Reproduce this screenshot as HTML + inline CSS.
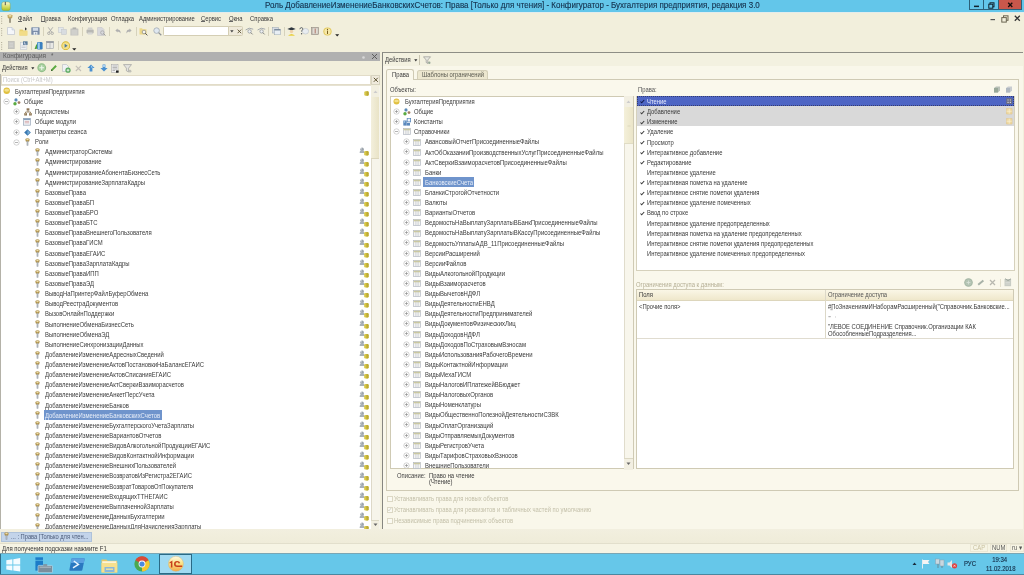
<!DOCTYPE html>
<html><head><meta charset="utf-8"><style>
html,body{margin:0;padding:0;}
body{width:1024px;height:575px;overflow:hidden;position:relative;background:#f2efdc;font-family:"Liberation Sans", sans-serif;}
body>div,body>svg{position:absolute;}
.t{white-space:nowrap;}
#w{position:absolute;left:0;top:0;width:1024px;height:575px;will-change:transform;}
#w>div,#w>svg{position:absolute;}
</style></head><body><div id="w">
<div style="left:0.00px;top:0.00px;width:1024.00px;height:11.50px;background:#63c6ea"></div>
<svg style="left:1.00px;top:1.00px;" width="10" height="10" viewBox="0 0 10 10"><defs><linearGradient id="gt" x1="0" y1="0" x2="0" y2="1"><stop offset="0" stop-color="#f6f8d8"/><stop offset="0.5" stop-color="#dce070"/><stop offset="1" stop-color="#a8c020"/></linearGradient></defs><rect x="0.8" y="1" width="8.4" height="8.6" rx="2" fill="url(#gt)" stroke="#90a030" stroke-width="0.4"/><path d="M4.3 0.9 V4.2" stroke="#333" stroke-width="0.8"/></svg>
<div class="t" style="left:264.50px;top:0.90px;font-size:8.25px;line-height:9.90px;color:#14304c;transform:scaleX(0.97);transform-origin:0 50%;-webkit-text-stroke:0.12px #14304c;">Роль ДобавлениеИзменениеБанковскихСчетов: Права [Только для чтения] - Конфигуратор - Бухгалтерия предприятия, редакция 3.0</div>
<div style="left:969.20px;top:0.00px;width:15.00px;height:10.30px;border:0.8px solid #2b5f78;border-top:none;box-sizing:border-box;background:#63c6ea"></div>
<div style="left:984.20px;top:0.00px;width:14.00px;height:10.30px;border-bottom:0.8px solid #2b5f78;box-sizing:border-box;background:#63c6ea"></div>
<div style="left:998.00px;top:0.00px;width:24.20px;height:10.30px;background:#c9574b;border:0.8px solid #2b5f78;border-top:none;box-sizing:border-box"></div>
<svg style="left:974.00px;top:4.50px;" width="6" height="3" viewBox="0 0 6 3"><rect x="0" y="0.6" width="5" height="1.5" fill="#10222e"/></svg>
<svg style="left:988.00px;top:1.50px;" width="7" height="7" viewBox="0 0 7 7"><rect x="2" y="0.8" width="4" height="4" fill="none" stroke="#10222e" stroke-width="1"/><rect x="0.8" y="2.2" width="4" height="4" fill="#63c6ea" stroke="#10222e" stroke-width="1"/></svg>
<svg style="left:1007.00px;top:1.50px;" width="7" height="6" viewBox="0 0 7 6"><path d="M1.2 0.8 L5.3 5 M5.3 0.8 L1.2 5" stroke="#1a0c0a" stroke-width="1.3"/></svg>
<div style="left:0.00px;top:11.50px;width:1024.00px;height:1.00px;background:#e4ecec"></div>
<svg style="left:1.20px;top:15.50px;" width="2" height="8" viewBox="0 0 2 8"><rect x="0" y="0.0" width="1.2" height="1" fill="#b8b4a0"/><rect x="0" y="2.3" width="1.2" height="1" fill="#b8b4a0"/><rect x="0" y="4.6" width="1.2" height="1" fill="#b8b4a0"/><rect x="0" y="6.8999999999999995" width="1.2" height="1" fill="#b8b4a0"/></svg>
<svg style="left:1.20px;top:28.00px;" width="2" height="8" viewBox="0 0 2 8"><rect x="0" y="0.0" width="1.2" height="1" fill="#b8b4a0"/><rect x="0" y="2.3" width="1.2" height="1" fill="#b8b4a0"/><rect x="0" y="4.6" width="1.2" height="1" fill="#b8b4a0"/><rect x="0" y="6.8999999999999995" width="1.2" height="1" fill="#b8b4a0"/></svg>
<svg style="left:1.20px;top:41.50px;" width="2" height="8" viewBox="0 0 2 8"><rect x="0" y="0.0" width="1.2" height="1" fill="#b8b4a0"/><rect x="0" y="2.3" width="1.2" height="1" fill="#b8b4a0"/><rect x="0" y="4.6" width="1.2" height="1" fill="#b8b4a0"/><rect x="0" y="6.8999999999999995" width="1.2" height="1" fill="#b8b4a0"/></svg>
<svg style="left:6.60px;top:14.00px;" width="6" height="9" viewBox="0 0 6 9"><path d="M0.4 1.3 Q3 -0.4 5.6 1.3 L5.1 4.1 Q3 5.1 0.9 4.1 Z" fill="#c0a460"/><ellipse cx="3" cy="1.8" rx="1.5" ry="0.9" fill="#f0e2a8"/><rect x="2.2" y="4.2" width="1.6" height="4.6" fill="#8a8470"/></svg>
<div class="t" style="left:18.00px;top:14.55px;font-size:6.50px;line-height:7.80px;color:#3a3a3a;transform:scaleX(0.9);transform-origin:0 50%;">Файл</div>
<div style="left:18.00px;top:21.20px;width:4.20px;height:0.55px;background:#666"></div>
<div class="t" style="left:41.00px;top:14.55px;font-size:6.50px;line-height:7.80px;color:#3a3a3a;transform:scaleX(0.9);transform-origin:0 50%;">Правка</div>
<div style="left:41.00px;top:21.20px;width:4.20px;height:0.55px;background:#666"></div>
<div class="t" style="left:67.70px;top:14.55px;font-size:6.50px;line-height:7.80px;color:#3a3a3a;transform:scaleX(0.9);transform-origin:0 50%;">Конфигурация</div>
<div class="t" style="left:111.00px;top:14.55px;font-size:6.50px;line-height:7.80px;color:#3a3a3a;transform:scaleX(0.9);transform-origin:0 50%;">Отладка</div>
<div class="t" style="left:139.00px;top:14.55px;font-size:6.50px;line-height:7.80px;color:#3a3a3a;transform:scaleX(0.9);transform-origin:0 50%;">Администрирование</div>
<div class="t" style="left:201.00px;top:14.55px;font-size:6.50px;line-height:7.80px;color:#3a3a3a;transform:scaleX(0.9);transform-origin:0 50%;">Сервис</div>
<div style="left:201.00px;top:21.20px;width:4.20px;height:0.55px;background:#666"></div>
<div class="t" style="left:228.90px;top:14.55px;font-size:6.50px;line-height:7.80px;color:#3a3a3a;transform:scaleX(0.9);transform-origin:0 50%;">Окна</div>
<div style="left:228.90px;top:21.20px;width:4.20px;height:0.55px;background:#666"></div>
<div class="t" style="left:250.40px;top:14.55px;font-size:6.50px;line-height:7.80px;color:#3a3a3a;transform:scaleX(0.9);transform-origin:0 50%;">Справка</div>
<svg style="left:990.00px;top:17.00px;" width="7" height="4" viewBox="0 0 7 4"><rect x="0.5" y="2" width="4.5" height="1.2" fill="#555"/></svg>
<svg style="left:1001.00px;top:14.50px;" width="8" height="8" viewBox="0 0 8 8"><rect x="2.5" y="0.8" width="4.5" height="4.5" fill="none" stroke="#6a6450" stroke-width="1"/><rect x="0.8" y="2.6" width="4.5" height="4.5" fill="#f2efdc" stroke="#6a6450" stroke-width="1"/></svg>
<svg style="left:1013.50px;top:14.80px;" width="7" height="7" viewBox="0 0 7 7"><path d="M0.8 0.8 L5.8 5.8 M5.8 0.8 L0.8 5.8" stroke="#333" stroke-width="1.25"/></svg>
<svg style="left:7.00px;top:27.00px;" width="8" height="8" viewBox="0 0 8 8"><path d="M0.5 0.5 H5 L7.5 3 V7.5 H0.5 Z" fill="#f4f6fa" stroke="#b8c0cc" stroke-width="0.6"/><path d="M5 0.5 V3 H7.5" fill="#dde2ea" stroke="#b8c0cc" stroke-width="0.5"/></svg>
<svg style="left:19.00px;top:26.50px;" width="9" height="9" viewBox="0 0 9 9"><path d="M0.5 2.5 H3.5 L4.3 3.5 H8.3 V8.5 H0.5 Z" fill="#e8cf70"/><rect x="0.5" y="4.2" width="7.8" height="4.3" fill="#f2dc88"/><path d="M6 0.3 L8 2 L6 3.6" fill="#333"/></svg>
<svg style="left:30.50px;top:27.00px;" width="9" height="8" viewBox="0 0 9 8"><rect x="0.3" y="0.3" width="8.3" height="7.5" rx="0.6" fill="#7a8ca8"/><rect x="1.8" y="0.8" width="5.3" height="3" fill="#d0dae8"/><rect x="2.6" y="5" width="3.8" height="2.8" fill="#e8eef4"/><rect x="4.2" y="5.6" width="1" height="1.8" fill="#7a8ca8"/></svg>
<div style="left:42.50px;top:26.50px;width:0.70px;height:9.00px;background:#d6d2bc"></div>
<svg style="left:47.00px;top:27.00px;" width="7" height="8" viewBox="0 0 7 8"><path d="M1.2 0.3 L4.8 5.2 M5.8 0.3 L2.2 5.2" stroke="#a8a8a8" stroke-width="0.9"/><circle cx="1.8" cy="6.3" r="1.2" fill="none" stroke="#a0a0a0" stroke-width="0.8"/><circle cx="5.2" cy="6.3" r="1.2" fill="none" stroke="#a0a0a0" stroke-width="0.8"/></svg>
<svg style="left:58.00px;top:27.00px;" width="9" height="8" viewBox="0 0 9 8"><rect x="0.4" y="0.4" width="4.8" height="5.2" fill="#e4e8ec" stroke="#c0c4c8" stroke-width="0.5"/><rect x="3.6" y="2.4" width="4.8" height="5.2" fill="#d8dce0" stroke="#c0c4c8" stroke-width="0.5"/></svg>
<svg style="left:70.00px;top:26.50px;" width="9" height="9" viewBox="0 0 9 9"><rect x="0.4" y="1.4" width="8" height="7.2" rx="0.5" fill="#c4c4c0"/><rect x="2.6" y="0.4" width="3.6" height="1.6" fill="#b0b0ac"/><rect x="1.5" y="3" width="5.8" height="4.8" fill="#d0d0cc"/></svg>
<div style="left:81.70px;top:26.50px;width:0.70px;height:9.00px;background:#d6d2bc"></div>
<svg style="left:86.00px;top:27.00px;" width="8" height="8" viewBox="0 0 8 8"><rect x="0.5" y="2.6" width="7.2" height="3.8" rx="0.8" fill="#b8b8b4"/><rect x="1.8" y="0.5" width="4.6" height="2.4" fill="#d0d0cc"/><rect x="1.8" y="5.4" width="4.6" height="2.2" fill="#d8d8d4"/></svg>
<svg style="left:97.00px;top:26.50px;" width="9" height="9" viewBox="0 0 9 9"><path d="M0.5 0.5 H5 L7 2.5 V8.5 H0.5 Z" fill="#d8d8dc" stroke="#c0c0c4" stroke-width="0.5"/><circle cx="5.4" cy="5.6" r="1.8" fill="none" stroke="#a8a8a8" stroke-width="0.8"/><path d="M6.6 6.8 L8.5 8.6" stroke="#909090" stroke-width="1"/></svg>
<div style="left:109.00px;top:26.50px;width:0.70px;height:9.00px;background:#d6d2bc"></div>
<svg style="left:114.50px;top:28.00px;" width="6" height="6" viewBox="0 0 6 6"><path d="M0.4 2.4 L2.6 0.4 V1.6 Q5.8 1.6 5.6 5.6 Q4.6 3.4 2.6 3.4 V4.5 Z" fill="#b0b0b0"/></svg>
<svg style="left:125.60px;top:28.00px;" width="6" height="6" viewBox="0 0 6 6"><path d="M5.6 2.4 L3.4 0.4 V1.6 Q0.2 1.6 0.4 5.6 Q1.4 3.4 3.4 3.4 V4.5 Z" fill="#b0b0b0"/></svg>
<div style="left:136.20px;top:26.50px;width:0.70px;height:9.00px;background:#d6d2bc"></div>
<svg style="left:139.30px;top:26.50px;" width="9" height="9" viewBox="0 0 9 9"><path d="M0.5 1.2 H3 L3.8 2.2 H7.5 V7.5 H0.5 Z" fill="#ecd888"/><circle cx="5" cy="5" r="1.8" fill="#f4f4f0" stroke="#888" stroke-width="0.7"/><path d="M6.2 6.2 L8.4 8.4" stroke="#555" stroke-width="1"/></svg>
<svg style="left:152.80px;top:26.50px;" width="9" height="9" viewBox="0 0 9 9"><circle cx="3.6" cy="3.6" r="2.8" fill="#e0e8f0" stroke="#a8b0b8" stroke-width="0.9"/><path d="M5.6 5.6 L8.3 8.3" stroke="#909498" stroke-width="1.3"/></svg>
<div style="left:163.00px;top:26.30px;width:73.00px;height:9.70px;background:#fff;border:0.6px solid #d4ceb4;border-radius:1.5px 0 0 1.5px;box-sizing:border-box"></div>
<div style="left:227.60px;top:26.30px;width:15.00px;height:9.70px;background:#efeadb;border:0.6px solid #d4ceb4;border-radius:0 1.5px 1.5px 0;box-sizing:border-box"></div>
<svg style="left:229.50px;top:30.00px;" width="4" height="3" viewBox="0 0 4 3"><path d="M0.2 0.3 H3.6 L1.9 2.5 Z" fill="#444"/></svg>
<svg style="left:236.80px;top:28.60px;" width="5" height="5" viewBox="0 0 5 5"><path d="M0.6 0.6 L4.2 4.2 M4.2 0.6 L0.6 4.2" stroke="#5a5030" stroke-width="0.9"/></svg>
<svg style="left:244.50px;top:27.00px;" width="9" height="8" viewBox="0 0 9 8"><path d="M0.6 3 Q4 -0.2 8.2 2.2" fill="none" stroke="#9aa0a8" stroke-width="0.9"/><circle cx="4.6" cy="4.4" r="1.7" fill="#eef0f2" stroke="#8a9098" stroke-width="0.7"/><path d="M5.8 5.6 L7.6 7.4" stroke="#777" stroke-width="0.9"/></svg>
<svg style="left:257.20px;top:27.00px;" width="9" height="8" viewBox="0 0 9 8"><path d="M0.6 3 Q4 -0.2 8.2 2.2" fill="none" stroke="#9aa0a8" stroke-width="0.9"/><circle cx="4.6" cy="4.4" r="1.7" fill="#eef0f2" stroke="#8a9098" stroke-width="0.7"/><path d="M5.8 5.6 L7.6 7.4" stroke="#777" stroke-width="0.9"/></svg>
<div style="left:268.40px;top:26.50px;width:0.70px;height:9.00px;background:#d6d2bc"></div>
<svg style="left:272.00px;top:27.00px;" width="9" height="8" viewBox="0 0 9 8"><rect x="0.4" y="0.4" width="6" height="5.6" fill="#d8dee6" stroke="#98a4b0" stroke-width="0.5"/><rect x="2.4" y="2.2" width="6" height="5.6" fill="#e8eef4" stroke="#98a4b0" stroke-width="0.5"/><rect x="2.4" y="2.2" width="6" height="1.2" fill="#6a7c90"/></svg>
<div style="left:283.60px;top:26.50px;width:0.70px;height:9.00px;background:#d6d2bc"></div>
<svg style="left:287.00px;top:26.50px;" width="9" height="9" viewBox="0 0 9 9"><path d="M0.3 2 L4.5 0.3 L8.7 2 L4.5 3.6 Z" fill="#303840"/><circle cx="4.5" cy="4.6" r="1.7" fill="#f0d0a8"/><path d="M1 8.8 Q4.5 5.2 8 8.8 Z" fill="#e8d040"/></svg>
<svg style="left:299.00px;top:26.50px;" width="10" height="9" viewBox="0 0 10 9"><ellipse cx="6.5" cy="4.2" rx="3.2" ry="2.8" fill="#e8ecf0" stroke="#b0b8c0" stroke-width="0.5"/><path d="M0.8 2.2 Q1.2 0.4 2.8 0.6 Q4.2 0.9 3.6 2.6 Q2.6 3.4 2.6 4.6" fill="none" stroke="#505860" stroke-width="0.9"/><circle cx="2.6" cy="6.8" r="0.7" fill="#505860"/></svg>
<svg style="left:311.00px;top:27.00px;" width="8" height="8" viewBox="0 0 8 8"><rect x="0.5" y="0.5" width="7" height="7" fill="#b8b0a8" stroke="#8a8278" stroke-width="0.5"/><rect x="1.6" y="1.2" width="5.2" height="5.6" fill="#e0dcd4"/><path d="M4.2 1.6 V6.4" stroke="#9a4a3a" stroke-width="0.7"/></svg>
<svg style="left:323.30px;top:26.50px;" width="9" height="9" viewBox="0 0 9 9"><circle cx="4.5" cy="4.5" r="4.1" fill="#e0c450"/><circle cx="4.5" cy="4.5" r="3.2" fill="#f6e8a8"/><rect x="4" y="3.6" width="1" height="3.4" fill="#7a6020"/><circle cx="4.5" cy="2.4" r="0.6" fill="#7a6020"/></svg>
<svg style="left:335.00px;top:33.50px;" width="5" height="3" viewBox="0 0 5 3"><path d="M0.2 0.3 H4.2 L2.2 2.6 Z" fill="#222"/></svg>
<svg style="left:7.50px;top:41.20px;" width="7" height="8" viewBox="0 0 7 8"><rect x="0.4" y="0.4" width="5.8" height="7.4" fill="#c8c8c4" stroke="#b0b0ac" stroke-width="0.5"/><path d="M1.5 2.4 H5 M1.5 4 H5 M1.5 5.6 H5" stroke="#dcdcd8" stroke-width="0.5"/></svg>
<svg style="left:19.50px;top:40.70px;" width="8" height="9" viewBox="0 0 8 9"><rect x="0.4" y="1.2" width="6.5" height="7.4" fill="#eef0f2" stroke="#b8c0c8" stroke-width="0.5"/><rect x="3" y="0.3" width="4.6" height="3.6" fill="#5a7c9c"/><path d="M4.4 1 V3 H6.2" fill="none" stroke="#eef" stroke-width="0.6"/><path d="M1.4 5 H5.6 M1.4 6.5 H5.6" stroke="#a8b0b8" stroke-width="0.5"/></svg>
<div style="left:30.50px;top:40.70px;width:0.70px;height:9.00px;background:#d6d2bc"></div>
<svg style="left:33.60px;top:40.70px;" width="9" height="9" viewBox="0 0 9 9"><path d="M0.6 8 L2.4 3 L3.6 5 L2.6 8 Z" fill="#4aa040"/><rect x="3" y="1" width="5.6" height="7.6" rx="1.3" fill="#3a80c0"/><rect x="3.8" y="1.6" width="2" height="6.4" fill="#a0d0f0"/></svg>
<svg style="left:46.00px;top:41.20px;" width="8" height="8" viewBox="0 0 8 8"><rect x="0.4" y="0.4" width="7.2" height="7.2" fill="#e8e8e6" stroke="#a0a4a8" stroke-width="0.6"/><rect x="0.4" y="0.4" width="7.2" height="1.4" fill="#8a9098"/><path d="M4 1.8 V7.6" stroke="#a0a4a8" stroke-width="0.6"/></svg>
<div style="left:58.00px;top:40.70px;width:0.70px;height:9.00px;background:#d6d2bc"></div>
<svg style="left:60.50px;top:40.60px;" width="9.5" height="9.5" viewBox="0 0 9.5 9.5"><circle cx="4.75" cy="4.75" r="4.4" fill="#d8b830"/><circle cx="4.75" cy="4.75" r="3.5" fill="#f4e08a"/><path d="M3.6 2.8 L6.6 4.75 L3.6 6.7 Z" fill="#4a7a9a"/></svg>
<svg style="left:72.30px;top:48.00px;" width="5" height="3" viewBox="0 0 5 3"><path d="M0.2 0.3 H4.4 L2.3 2.6 Z" fill="#222"/></svg>
<div style="left:0.00px;top:51.80px;width:380.00px;height:9.50px;background:#b0b0b0"></div>
<div class="t" style="left:2.50px;top:52.38px;font-size:7.11px;line-height:8.53px;color:#5a5a5a;transform:scaleX(0.9);transform-origin:0 50%;">Конфигурация</div>
<div class="t" style="left:50.50px;top:52.05px;font-size:6.67px;line-height:8.00px;color:#5a5a5a;transform:scaleX(0.9);transform-origin:0 50%;">*</div>
<svg style="left:361.00px;top:54.50px;" width="5" height="5" viewBox="0 0 5 5"><circle cx="2.5" cy="2.5" r="1.3" fill="#d8d8d8"/></svg>
<svg style="left:371.00px;top:53.00px;" width="7" height="7" viewBox="0 0 7 7"><path d="M1 1 L6 6 M6 1 L1 6" stroke="#555" stroke-width="0.9"/></svg>
<div class="t" style="left:2.00px;top:63.75px;font-size:6.50px;line-height:7.80px;color:#3a3a3a;transform:scaleX(0.9);transform-origin:0 50%;">Действия</div>
<svg style="left:30.50px;top:67.00px;" width="4" height="3" viewBox="0 0 4 3"><path d="M0.2 0.3 H3.4 L1.8 2.4 Z" fill="#333"/></svg>
<svg style="left:37.00px;top:63.40px;" width="9.5" height="9.5" viewBox="0 0 9.5 9.5"><circle cx="4.75" cy="4.75" r="4.4" fill="#8cbc84"/><circle cx="4.75" cy="4.75" r="3.4" fill="#a8d0a0"/><path d="M4.75 2.4 V7.1 M2.4 4.75 H7.1" stroke="#f0f8f0" stroke-width="1"/></svg>
<svg style="left:50.30px;top:64.00px;" width="7.5" height="8" viewBox="0 0 7.5 8"><path d="M1 7 L1.4 5.2 L5.4 1 L6.8 2.4 L2.8 6.6 Z" fill="#5aaa40"/><path d="M1 7 L1.4 5.2 L2.8 6.6 Z" fill="#2a4a20"/></svg>
<svg style="left:62.00px;top:63.50px;" width="9" height="9" viewBox="0 0 9 9"><path d="M0.5 0.5 H4.5 L6.5 2.5 V7.5 H0.5 Z" fill="#f0f2f4" stroke="#a8b0b8" stroke-width="0.5"/><circle cx="6" cy="6.2" r="2.6" fill="#5aaa60"/><path d="M6 4.8 V7.6 M4.6 6.2 H7.4" stroke="#fff" stroke-width="0.8"/></svg>
<svg style="left:75.00px;top:64.50px;" width="7" height="7" viewBox="0 0 7 7"><path d="M0.8 0.8 L6 6 M6 0.8 L0.8 6" stroke="#c4c0b8" stroke-width="1.1"/></svg>
<svg style="left:87.00px;top:64.00px;" width="8" height="8" viewBox="0 0 8 8"><path d="M4 0.4 L7.6 4 H5.4 V7.4 H2.6 V4 H0.4 Z" fill="#4a90d0"/><path d="M4 1.4 L6 3.4 H4 Z" fill="#a8d0f0"/></svg>
<svg style="left:100.00px;top:64.00px;" width="8" height="8" viewBox="0 0 8 8"><path d="M4 7.6 L7.6 4 H5.4 V0.6 H2.6 V4 H0.4 Z" fill="#4a90d0"/><path d="M2.6 1 H5.4 V3 H2.6 Z" fill="#a8d0f0"/></svg>
<svg style="left:111.00px;top:63.50px;" width="8" height="9" viewBox="0 0 8 9"><rect x="0.5" y="0.5" width="6.5" height="8" fill="#f0f0f0" stroke="#a0a0a0" stroke-width="0.5"/><path d="M1.5 2 H6 M1.5 3.5 H6 M1.5 5 H6 M1.5 6.5 H4" stroke="#909090" stroke-width="0.6"/><rect x="5" y="6.5" width="2.6" height="2.2" fill="#222"/></svg>
<svg style="left:123.00px;top:63.50px;" width="9" height="9" viewBox="0 0 9 9"><path d="M0.5 0.6 H8.5 L5.6 4.2 V8 L3.4 6.8 V4.2 Z" fill="#e4e4e0" stroke="#909090" stroke-width="0.6"/><circle cx="7" cy="7.2" r="1.4" fill="#c0c0b8"/></svg>
<div style="left:1.00px;top:74.50px;width:369.50px;height:10.00px;background:#fff;border:0.6px solid #e2dcc8;box-sizing:border-box"></div>
<div class="t" style="left:2.50px;top:75.51px;font-size:6.56px;line-height:7.87px;color:#c8c8c8;transform:scaleX(0.9);transform-origin:0 50%;">Поиск (Ctrl+Alt+M)</div>
<div style="left:370.50px;top:74.50px;width:9.00px;height:10.00px;background:#efeadc;border:0.6px solid #d8d4c0;box-sizing:border-box"></div>
<svg style="left:372.50px;top:76.50px;" width="6" height="6" viewBox="0 0 6 6"><path d="M0.8 0.8 L4.8 4.8 M4.8 0.8 L0.8 4.8" stroke="#5a5030" stroke-width="1"/></svg>
<div style="left:0.00px;top:84.50px;width:371.00px;height:1.50px;background:#e6e2d2"></div>
<div style="left:1.00px;top:86.00px;width:369.50px;height:444.00px;background:#fff"></div>
<div style="left:0.00px;top:73.50px;width:0.90px;height:456.50px;background:#b4b2a8"></div>
<div style="left:370.50px;top:86.00px;width:9.00px;height:444.00px;background:#f6f4ea;border-left:0.5px solid #ddd8c8;box-sizing:border-box"></div>
<div style="left:370.80px;top:86.00px;width:8.60px;height:11.50px;background:#f2efe0;border-bottom:0.5px solid #dcd8c4"></div>
<div style="left:370.80px;top:97.30px;width:8.60px;height:61.00px;background:linear-gradient(90deg,#f3efdc,#e9e3c6);border-bottom:0.5px solid #dcd6bc"></div>
<div style="left:370.80px;top:519.50px;width:8.60px;height:10.50px;background:#f2efe0;border-top:0.5px solid #dcd8c4"></div>
<svg style="left:372.50px;top:523.00px;" width="5" height="4" viewBox="0 0 5 4"><path d="M0.5 0.5 H4.5 L2.5 3 Z" fill="#666"/></svg>
<svg style="left:372.50px;top:89.50px;" width="5" height="4" viewBox="0 0 5 4"><path d="M0.5 3 H4.5 L2.5 0.5 Z" fill="#ccc"/></svg>
<svg style="left:3.20px;top:87.30px;" width="7.4" height="7.4" viewBox="0 0 7.4 7.4"><circle cx="3.7" cy="3.7" r="3.2" fill="#e0c040"/><ellipse cx="3.7" cy="3.2" rx="2.4000000000000004" ry="1.4400000000000002" fill="#f4e08a"/></svg>
<svg style="left:363.60px;top:90.60px;" width="5" height="5" viewBox="0 0 5 5"><rect x="0.3" y="0.3" width="4.4" height="4.4" rx="1.3" fill="#d6c648"/><path d="M2.5 0.3 H3.4 Q4.7 0.3 4.7 1.6 V3.4 Q4.7 4.7 3.4 4.7 H2.5 Z" fill="#bcaa36"/></svg>
<div class="t" style="left:14.80px;top:87.55px;font-size:6.50px;line-height:7.80px;color:#3a3a3a;transform:scaleX(0.9);transform-origin:0 50%;">БухгалтерияПредприятия</div>
<svg style="left:3.00px;top:98.00px;" width="7" height="7" viewBox="0 0 7 7"><circle cx="3.5" cy="3.5" r="2.7" fill="#fff" stroke="#c0c0c0" stroke-width="0.7"/><path d="M2 3.5 H5" stroke="#8a8a8a" stroke-width="0.65"/></svg>
<svg style="left:12.50px;top:97.73px;" width="8" height="8" viewBox="0 0 8 8"><circle cx="3" cy="1.9" r="1.6" fill="#5a8ab8"/><circle cx="2" cy="5.8" r="1.7" fill="#5aaa40"/><circle cx="6" cy="4.6" r="1.4" fill="#a07a60"/></svg>
<div class="t" style="left:24.00px;top:97.68px;font-size:6.50px;line-height:7.80px;color:#3a3a3a;transform:scaleX(0.9);transform-origin:0 50%;">Общие</div>
<svg style="left:13.00px;top:108.00px;" width="7" height="7" viewBox="0 0 7 7"><circle cx="3.5" cy="3.5" r="2.7" fill="#fff" stroke="#c0c0c0" stroke-width="0.7"/><path d="M2 3.5 H5" stroke="#8a8a8a" stroke-width="0.65"/><path d="M3.5 2 V5" stroke="#8a8a8a" stroke-width="0.65"/></svg>
<div class="t" style="left:34.80px;top:107.81px;font-size:6.50px;line-height:7.80px;color:#3a3a3a;transform:scaleX(0.9);transform-origin:0 50%;">Подсистемы</div>
<svg style="left:23.50px;top:107.86px;" width="8" height="8" viewBox="0 0 8 8"><rect x="2.6" y="0.3" width="2.8" height="2.2" fill="#8c7454"/><path d="M4 2.3 V4 M1.5 4 H6.5 M1.5 4 V5.5 M6.5 4 V5.5" stroke="#8c7454" stroke-width="0.8"/><rect x="0.2" y="5.1" width="2.8" height="2.4" fill="#8c7454"/><rect x="5" y="5.1" width="2.8" height="2.4" fill="#8c7454"/><rect x="0.6" y="5.5" width="1.6" height="0.8" fill="#d8c8a8"/><rect x="5.4" y="5.5" width="1.6" height="0.8" fill="#d8c8a8"/></svg>
<svg style="left:13.00px;top:118.00px;" width="7" height="7" viewBox="0 0 7 7"><circle cx="3.5" cy="3.5" r="2.7" fill="#fff" stroke="#c0c0c0" stroke-width="0.7"/><path d="M2 3.5 H5" stroke="#8a8a8a" stroke-width="0.65"/><path d="M3.5 2 V5" stroke="#8a8a8a" stroke-width="0.65"/></svg>
<div class="t" style="left:34.80px;top:117.94px;font-size:6.50px;line-height:7.80px;color:#3a3a3a;transform:scaleX(0.9);transform-origin:0 50%;">Общие модули</div>
<svg style="left:23.40px;top:118.19px;" width="8" height="8" viewBox="0 0 8 8"><rect x="0.4" y="0.4" width="7" height="6.8" fill="#eef0f4" stroke="#9aa8b8" stroke-width="0.7"/><rect x="0.6" y="0.6" width="6.6" height="1.2" fill="#6c8cb0"/><path d="M1.8 3.4 H6 M1.8 4.8 H6" stroke="#d09090" stroke-width="0.6"/></svg>
<svg style="left:13.00px;top:129.00px;" width="7" height="7" viewBox="0 0 7 7"><circle cx="3.5" cy="3.5" r="2.7" fill="#fff" stroke="#c0c0c0" stroke-width="0.7"/><path d="M2 3.5 H5" stroke="#8a8a8a" stroke-width="0.65"/><path d="M3.5 2 V5" stroke="#8a8a8a" stroke-width="0.65"/></svg>
<div class="t" style="left:34.80px;top:128.07px;font-size:6.50px;line-height:7.80px;color:#3a3a3a;transform:scaleX(0.9);transform-origin:0 50%;">Параметры сеанса</div>
<svg style="left:23.80px;top:128.62px;" width="7" height="7" viewBox="0 0 7 7"><path d="M3.5 0.2 L6.8 3.5 L3.5 6.8 L0.2 3.5 Z" fill="#3a78b0"/><path d="M3.5 1.2 L5.8 3.5 L3.5 5.8 Z" fill="#7ab0d8"/></svg>
<svg style="left:13.00px;top:139.00px;" width="7" height="7" viewBox="0 0 7 7"><circle cx="3.5" cy="3.5" r="2.7" fill="#fff" stroke="#c0c0c0" stroke-width="0.7"/><path d="M2 3.5 H5" stroke="#8a8a8a" stroke-width="0.65"/></svg>
<svg style="left:24.50px;top:137.85px;" width="5" height="8" viewBox="0 0 5 8"><path d="M0.3 0.9 Q2.5 -0.5 4.7 0.9 L4.3 3.3 Q2.5 4.3 0.7 3.3 Z" fill="#b09450"/><ellipse cx="2.5" cy="1.5" rx="1.2" ry="0.8" fill="#ecdca8"/><rect x="1.7" y="3.3" width="1.6" height="4.3" fill="#8e969e"/><rect x="2.1" y="3.6" width="0.5" height="3.6" fill="#c8ced4"/></svg>
<div class="t" style="left:34.80px;top:138.20px;font-size:6.50px;line-height:7.80px;color:#3a3a3a;transform:scaleX(0.9);transform-origin:0 50%;">Роли</div>
<svg style="left:34.70px;top:147.98px;" width="5" height="8" viewBox="0 0 5 8"><path d="M0.3 0.9 Q2.5 -0.5 4.7 0.9 L4.3 3.3 Q2.5 4.3 0.7 3.3 Z" fill="#b09450"/><ellipse cx="2.5" cy="1.5" rx="1.2" ry="0.8" fill="#ecdca8"/><rect x="1.7" y="3.3" width="1.6" height="4.3" fill="#8e969e"/><rect x="2.1" y="3.6" width="0.5" height="3.6" fill="#c8ced4"/></svg>
<div class="t" style="left:44.80px;top:148.28px;font-size:6.58px;line-height:7.89px;color:#3a3a3a;transform:scaleX(0.9);transform-origin:0 50%;">АдминистраторСистемы</div>
<svg style="left:359.40px;top:147.38px;" width="10" height="9" viewBox="0 0 10 9"><circle cx="3.1" cy="2.3" r="1.75" fill="#9ca4ac"/><path d="M0.6 6.0 Q0.6 3.1 3.1 3.1 Q5.6 3.1 5.6 6.0 Z" fill="#a8b0b8"/><circle cx="2.5" cy="1.8" r="0.6" fill="#d4dae0"/><rect x="5.2" y="3.9" width="4.4" height="4.6" rx="1.3" fill="#d6c648"/><path d="M7.4 3.9 H8.3 Q9.6 3.9 9.6 5.2 V7.2 Q9.6 8.5 8.3 8.5 H7.4 Z" fill="#bcaa36"/></svg>
<svg style="left:34.70px;top:158.11px;" width="5" height="8" viewBox="0 0 5 8"><path d="M0.3 0.9 Q2.5 -0.5 4.7 0.9 L4.3 3.3 Q2.5 4.3 0.7 3.3 Z" fill="#b09450"/><ellipse cx="2.5" cy="1.5" rx="1.2" ry="0.8" fill="#ecdca8"/><rect x="1.7" y="3.3" width="1.6" height="4.3" fill="#8e969e"/><rect x="2.1" y="3.6" width="0.5" height="3.6" fill="#c8ced4"/></svg>
<div class="t" style="left:44.80px;top:158.41px;font-size:6.58px;line-height:7.89px;color:#3a3a3a;transform:scaleX(0.9);transform-origin:0 50%;">Администрирование</div>
<svg style="left:359.40px;top:157.51px;" width="10" height="9" viewBox="0 0 10 9"><circle cx="3.1" cy="2.3" r="1.75" fill="#9ca4ac"/><path d="M0.6 6.0 Q0.6 3.1 3.1 3.1 Q5.6 3.1 5.6 6.0 Z" fill="#a8b0b8"/><circle cx="2.5" cy="1.8" r="0.6" fill="#d4dae0"/><rect x="5.2" y="3.9" width="4.4" height="4.6" rx="1.3" fill="#d6c648"/><path d="M7.4 3.9 H8.3 Q9.6 3.9 9.6 5.2 V7.2 Q9.6 8.5 8.3 8.5 H7.4 Z" fill="#bcaa36"/></svg>
<svg style="left:34.70px;top:168.24px;" width="5" height="8" viewBox="0 0 5 8"><path d="M0.3 0.9 Q2.5 -0.5 4.7 0.9 L4.3 3.3 Q2.5 4.3 0.7 3.3 Z" fill="#b09450"/><ellipse cx="2.5" cy="1.5" rx="1.2" ry="0.8" fill="#ecdca8"/><rect x="1.7" y="3.3" width="1.6" height="4.3" fill="#8e969e"/><rect x="2.1" y="3.6" width="0.5" height="3.6" fill="#c8ced4"/></svg>
<div class="t" style="left:44.80px;top:168.54px;font-size:6.58px;line-height:7.89px;color:#3a3a3a;transform:scaleX(0.9);transform-origin:0 50%;">АдминистрированиеАбонентаБизнесСеть</div>
<svg style="left:359.40px;top:167.64px;" width="10" height="9" viewBox="0 0 10 9"><circle cx="3.1" cy="2.3" r="1.75" fill="#9ca4ac"/><path d="M0.6 6.0 Q0.6 3.1 3.1 3.1 Q5.6 3.1 5.6 6.0 Z" fill="#a8b0b8"/><circle cx="2.5" cy="1.8" r="0.6" fill="#d4dae0"/><rect x="5.2" y="3.9" width="4.4" height="4.6" rx="1.3" fill="#d6c648"/><path d="M7.4 3.9 H8.3 Q9.6 3.9 9.6 5.2 V7.2 Q9.6 8.5 8.3 8.5 H7.4 Z" fill="#bcaa36"/></svg>
<svg style="left:34.70px;top:178.37px;" width="5" height="8" viewBox="0 0 5 8"><path d="M0.3 0.9 Q2.5 -0.5 4.7 0.9 L4.3 3.3 Q2.5 4.3 0.7 3.3 Z" fill="#b09450"/><ellipse cx="2.5" cy="1.5" rx="1.2" ry="0.8" fill="#ecdca8"/><rect x="1.7" y="3.3" width="1.6" height="4.3" fill="#8e969e"/><rect x="2.1" y="3.6" width="0.5" height="3.6" fill="#c8ced4"/></svg>
<div class="t" style="left:44.80px;top:178.67px;font-size:6.58px;line-height:7.89px;color:#3a3a3a;transform:scaleX(0.9);transform-origin:0 50%;">АдминистрированиеЗарплатаКадры</div>
<svg style="left:359.40px;top:177.77px;" width="10" height="9" viewBox="0 0 10 9"><circle cx="3.1" cy="2.3" r="1.75" fill="#9ca4ac"/><path d="M0.6 6.0 Q0.6 3.1 3.1 3.1 Q5.6 3.1 5.6 6.0 Z" fill="#a8b0b8"/><circle cx="2.5" cy="1.8" r="0.6" fill="#d4dae0"/><rect x="5.2" y="3.9" width="4.4" height="4.6" rx="1.3" fill="#d6c648"/><path d="M7.4 3.9 H8.3 Q9.6 3.9 9.6 5.2 V7.2 Q9.6 8.5 8.3 8.5 H7.4 Z" fill="#bcaa36"/></svg>
<svg style="left:34.70px;top:188.50px;" width="5" height="8" viewBox="0 0 5 8"><path d="M0.3 0.9 Q2.5 -0.5 4.7 0.9 L4.3 3.3 Q2.5 4.3 0.7 3.3 Z" fill="#b09450"/><ellipse cx="2.5" cy="1.5" rx="1.2" ry="0.8" fill="#ecdca8"/><rect x="1.7" y="3.3" width="1.6" height="4.3" fill="#8e969e"/><rect x="2.1" y="3.6" width="0.5" height="3.6" fill="#c8ced4"/></svg>
<div class="t" style="left:44.80px;top:188.81px;font-size:6.58px;line-height:7.89px;color:#3a3a3a;transform:scaleX(0.9);transform-origin:0 50%;">БазовыеПрава</div>
<svg style="left:359.40px;top:187.90px;" width="10" height="9" viewBox="0 0 10 9"><circle cx="3.1" cy="2.3" r="1.75" fill="#9ca4ac"/><path d="M0.6 6.0 Q0.6 3.1 3.1 3.1 Q5.6 3.1 5.6 6.0 Z" fill="#a8b0b8"/><circle cx="2.5" cy="1.8" r="0.6" fill="#d4dae0"/><rect x="5.2" y="3.9" width="4.4" height="4.6" rx="1.3" fill="#d6c648"/><path d="M7.4 3.9 H8.3 Q9.6 3.9 9.6 5.2 V7.2 Q9.6 8.5 8.3 8.5 H7.4 Z" fill="#bcaa36"/></svg>
<svg style="left:34.70px;top:198.63px;" width="5" height="8" viewBox="0 0 5 8"><path d="M0.3 0.9 Q2.5 -0.5 4.7 0.9 L4.3 3.3 Q2.5 4.3 0.7 3.3 Z" fill="#b09450"/><ellipse cx="2.5" cy="1.5" rx="1.2" ry="0.8" fill="#ecdca8"/><rect x="1.7" y="3.3" width="1.6" height="4.3" fill="#8e969e"/><rect x="2.1" y="3.6" width="0.5" height="3.6" fill="#c8ced4"/></svg>
<div class="t" style="left:44.80px;top:198.94px;font-size:6.58px;line-height:7.89px;color:#3a3a3a;transform:scaleX(0.9);transform-origin:0 50%;">БазовыеПраваБП</div>
<svg style="left:359.40px;top:198.03px;" width="10" height="9" viewBox="0 0 10 9"><circle cx="3.1" cy="2.3" r="1.75" fill="#9ca4ac"/><path d="M0.6 6.0 Q0.6 3.1 3.1 3.1 Q5.6 3.1 5.6 6.0 Z" fill="#a8b0b8"/><circle cx="2.5" cy="1.8" r="0.6" fill="#d4dae0"/><rect x="5.2" y="3.9" width="4.4" height="4.6" rx="1.3" fill="#d6c648"/><path d="M7.4 3.9 H8.3 Q9.6 3.9 9.6 5.2 V7.2 Q9.6 8.5 8.3 8.5 H7.4 Z" fill="#bcaa36"/></svg>
<svg style="left:34.70px;top:208.76px;" width="5" height="8" viewBox="0 0 5 8"><path d="M0.3 0.9 Q2.5 -0.5 4.7 0.9 L4.3 3.3 Q2.5 4.3 0.7 3.3 Z" fill="#b09450"/><ellipse cx="2.5" cy="1.5" rx="1.2" ry="0.8" fill="#ecdca8"/><rect x="1.7" y="3.3" width="1.6" height="4.3" fill="#8e969e"/><rect x="2.1" y="3.6" width="0.5" height="3.6" fill="#c8ced4"/></svg>
<div class="t" style="left:44.80px;top:209.06px;font-size:6.58px;line-height:7.89px;color:#3a3a3a;transform:scaleX(0.9);transform-origin:0 50%;">БазовыеПраваБРО</div>
<svg style="left:359.40px;top:208.16px;" width="10" height="9" viewBox="0 0 10 9"><circle cx="3.1" cy="2.3" r="1.75" fill="#9ca4ac"/><path d="M0.6 6.0 Q0.6 3.1 3.1 3.1 Q5.6 3.1 5.6 6.0 Z" fill="#a8b0b8"/><circle cx="2.5" cy="1.8" r="0.6" fill="#d4dae0"/><rect x="5.2" y="3.9" width="4.4" height="4.6" rx="1.3" fill="#d6c648"/><path d="M7.4 3.9 H8.3 Q9.6 3.9 9.6 5.2 V7.2 Q9.6 8.5 8.3 8.5 H7.4 Z" fill="#bcaa36"/></svg>
<svg style="left:34.70px;top:218.89px;" width="5" height="8" viewBox="0 0 5 8"><path d="M0.3 0.9 Q2.5 -0.5 4.7 0.9 L4.3 3.3 Q2.5 4.3 0.7 3.3 Z" fill="#b09450"/><ellipse cx="2.5" cy="1.5" rx="1.2" ry="0.8" fill="#ecdca8"/><rect x="1.7" y="3.3" width="1.6" height="4.3" fill="#8e969e"/><rect x="2.1" y="3.6" width="0.5" height="3.6" fill="#c8ced4"/></svg>
<div class="t" style="left:44.80px;top:219.19px;font-size:6.58px;line-height:7.89px;color:#3a3a3a;transform:scaleX(0.9);transform-origin:0 50%;">БазовыеПраваБТС</div>
<svg style="left:359.40px;top:218.29px;" width="10" height="9" viewBox="0 0 10 9"><circle cx="3.1" cy="2.3" r="1.75" fill="#9ca4ac"/><path d="M0.6 6.0 Q0.6 3.1 3.1 3.1 Q5.6 3.1 5.6 6.0 Z" fill="#a8b0b8"/><circle cx="2.5" cy="1.8" r="0.6" fill="#d4dae0"/><rect x="5.2" y="3.9" width="4.4" height="4.6" rx="1.3" fill="#d6c648"/><path d="M7.4 3.9 H8.3 Q9.6 3.9 9.6 5.2 V7.2 Q9.6 8.5 8.3 8.5 H7.4 Z" fill="#bcaa36"/></svg>
<svg style="left:34.70px;top:229.02px;" width="5" height="8" viewBox="0 0 5 8"><path d="M0.3 0.9 Q2.5 -0.5 4.7 0.9 L4.3 3.3 Q2.5 4.3 0.7 3.3 Z" fill="#b09450"/><ellipse cx="2.5" cy="1.5" rx="1.2" ry="0.8" fill="#ecdca8"/><rect x="1.7" y="3.3" width="1.6" height="4.3" fill="#8e969e"/><rect x="2.1" y="3.6" width="0.5" height="3.6" fill="#c8ced4"/></svg>
<div class="t" style="left:44.80px;top:229.33px;font-size:6.58px;line-height:7.89px;color:#3a3a3a;transform:scaleX(0.9);transform-origin:0 50%;">БазовыеПраваВнешнегоПользователя</div>
<svg style="left:359.40px;top:228.42px;" width="10" height="9" viewBox="0 0 10 9"><circle cx="3.1" cy="2.3" r="1.75" fill="#9ca4ac"/><path d="M0.6 6.0 Q0.6 3.1 3.1 3.1 Q5.6 3.1 5.6 6.0 Z" fill="#a8b0b8"/><circle cx="2.5" cy="1.8" r="0.6" fill="#d4dae0"/><rect x="5.2" y="3.9" width="4.4" height="4.6" rx="1.3" fill="#d6c648"/><path d="M7.4 3.9 H8.3 Q9.6 3.9 9.6 5.2 V7.2 Q9.6 8.5 8.3 8.5 H7.4 Z" fill="#bcaa36"/></svg>
<svg style="left:34.70px;top:239.15px;" width="5" height="8" viewBox="0 0 5 8"><path d="M0.3 0.9 Q2.5 -0.5 4.7 0.9 L4.3 3.3 Q2.5 4.3 0.7 3.3 Z" fill="#b09450"/><ellipse cx="2.5" cy="1.5" rx="1.2" ry="0.8" fill="#ecdca8"/><rect x="1.7" y="3.3" width="1.6" height="4.3" fill="#8e969e"/><rect x="2.1" y="3.6" width="0.5" height="3.6" fill="#c8ced4"/></svg>
<div class="t" style="left:44.80px;top:239.46px;font-size:6.58px;line-height:7.89px;color:#3a3a3a;transform:scaleX(0.9);transform-origin:0 50%;">БазовыеПраваГИСМ</div>
<svg style="left:359.40px;top:238.55px;" width="10" height="9" viewBox="0 0 10 9"><circle cx="3.1" cy="2.3" r="1.75" fill="#9ca4ac"/><path d="M0.6 6.0 Q0.6 3.1 3.1 3.1 Q5.6 3.1 5.6 6.0 Z" fill="#a8b0b8"/><circle cx="2.5" cy="1.8" r="0.6" fill="#d4dae0"/><rect x="5.2" y="3.9" width="4.4" height="4.6" rx="1.3" fill="#d6c648"/><path d="M7.4 3.9 H8.3 Q9.6 3.9 9.6 5.2 V7.2 Q9.6 8.5 8.3 8.5 H7.4 Z" fill="#bcaa36"/></svg>
<svg style="left:34.70px;top:249.28px;" width="5" height="8" viewBox="0 0 5 8"><path d="M0.3 0.9 Q2.5 -0.5 4.7 0.9 L4.3 3.3 Q2.5 4.3 0.7 3.3 Z" fill="#b09450"/><ellipse cx="2.5" cy="1.5" rx="1.2" ry="0.8" fill="#ecdca8"/><rect x="1.7" y="3.3" width="1.6" height="4.3" fill="#8e969e"/><rect x="2.1" y="3.6" width="0.5" height="3.6" fill="#c8ced4"/></svg>
<div class="t" style="left:44.80px;top:249.59px;font-size:6.58px;line-height:7.89px;color:#3a3a3a;transform:scaleX(0.9);transform-origin:0 50%;">БазовыеПраваЕГАИС</div>
<svg style="left:359.40px;top:248.68px;" width="10" height="9" viewBox="0 0 10 9"><circle cx="3.1" cy="2.3" r="1.75" fill="#9ca4ac"/><path d="M0.6 6.0 Q0.6 3.1 3.1 3.1 Q5.6 3.1 5.6 6.0 Z" fill="#a8b0b8"/><circle cx="2.5" cy="1.8" r="0.6" fill="#d4dae0"/><rect x="5.2" y="3.9" width="4.4" height="4.6" rx="1.3" fill="#d6c648"/><path d="M7.4 3.9 H8.3 Q9.6 3.9 9.6 5.2 V7.2 Q9.6 8.5 8.3 8.5 H7.4 Z" fill="#bcaa36"/></svg>
<svg style="left:34.70px;top:259.41px;" width="5" height="8" viewBox="0 0 5 8"><path d="M0.3 0.9 Q2.5 -0.5 4.7 0.9 L4.3 3.3 Q2.5 4.3 0.7 3.3 Z" fill="#b09450"/><ellipse cx="2.5" cy="1.5" rx="1.2" ry="0.8" fill="#ecdca8"/><rect x="1.7" y="3.3" width="1.6" height="4.3" fill="#8e969e"/><rect x="2.1" y="3.6" width="0.5" height="3.6" fill="#c8ced4"/></svg>
<div class="t" style="left:44.80px;top:259.72px;font-size:6.58px;line-height:7.89px;color:#3a3a3a;transform:scaleX(0.9);transform-origin:0 50%;">БазовыеПраваЗарплатаКадры</div>
<svg style="left:359.40px;top:258.81px;" width="10" height="9" viewBox="0 0 10 9"><circle cx="3.1" cy="2.3" r="1.75" fill="#9ca4ac"/><path d="M0.6 6.0 Q0.6 3.1 3.1 3.1 Q5.6 3.1 5.6 6.0 Z" fill="#a8b0b8"/><circle cx="2.5" cy="1.8" r="0.6" fill="#d4dae0"/><rect x="5.2" y="3.9" width="4.4" height="4.6" rx="1.3" fill="#d6c648"/><path d="M7.4 3.9 H8.3 Q9.6 3.9 9.6 5.2 V7.2 Q9.6 8.5 8.3 8.5 H7.4 Z" fill="#bcaa36"/></svg>
<svg style="left:34.70px;top:269.54px;" width="5" height="8" viewBox="0 0 5 8"><path d="M0.3 0.9 Q2.5 -0.5 4.7 0.9 L4.3 3.3 Q2.5 4.3 0.7 3.3 Z" fill="#b09450"/><ellipse cx="2.5" cy="1.5" rx="1.2" ry="0.8" fill="#ecdca8"/><rect x="1.7" y="3.3" width="1.6" height="4.3" fill="#8e969e"/><rect x="2.1" y="3.6" width="0.5" height="3.6" fill="#c8ced4"/></svg>
<div class="t" style="left:44.80px;top:269.85px;font-size:6.58px;line-height:7.89px;color:#3a3a3a;transform:scaleX(0.9);transform-origin:0 50%;">БазовыеПраваИПП</div>
<svg style="left:359.40px;top:268.94px;" width="10" height="9" viewBox="0 0 10 9"><circle cx="3.1" cy="2.3" r="1.75" fill="#9ca4ac"/><path d="M0.6 6.0 Q0.6 3.1 3.1 3.1 Q5.6 3.1 5.6 6.0 Z" fill="#a8b0b8"/><circle cx="2.5" cy="1.8" r="0.6" fill="#d4dae0"/><rect x="5.2" y="3.9" width="4.4" height="4.6" rx="1.3" fill="#d6c648"/><path d="M7.4 3.9 H8.3 Q9.6 3.9 9.6 5.2 V7.2 Q9.6 8.5 8.3 8.5 H7.4 Z" fill="#bcaa36"/></svg>
<svg style="left:34.70px;top:279.67px;" width="5" height="8" viewBox="0 0 5 8"><path d="M0.3 0.9 Q2.5 -0.5 4.7 0.9 L4.3 3.3 Q2.5 4.3 0.7 3.3 Z" fill="#b09450"/><ellipse cx="2.5" cy="1.5" rx="1.2" ry="0.8" fill="#ecdca8"/><rect x="1.7" y="3.3" width="1.6" height="4.3" fill="#8e969e"/><rect x="2.1" y="3.6" width="0.5" height="3.6" fill="#c8ced4"/></svg>
<div class="t" style="left:44.80px;top:279.98px;font-size:6.58px;line-height:7.89px;color:#3a3a3a;transform:scaleX(0.9);transform-origin:0 50%;">БазовыеПраваЭД</div>
<svg style="left:359.40px;top:279.07px;" width="10" height="9" viewBox="0 0 10 9"><circle cx="3.1" cy="2.3" r="1.75" fill="#9ca4ac"/><path d="M0.6 6.0 Q0.6 3.1 3.1 3.1 Q5.6 3.1 5.6 6.0 Z" fill="#a8b0b8"/><circle cx="2.5" cy="1.8" r="0.6" fill="#d4dae0"/><rect x="5.2" y="3.9" width="4.4" height="4.6" rx="1.3" fill="#d6c648"/><path d="M7.4 3.9 H8.3 Q9.6 3.9 9.6 5.2 V7.2 Q9.6 8.5 8.3 8.5 H7.4 Z" fill="#bcaa36"/></svg>
<svg style="left:34.70px;top:289.80px;" width="5" height="8" viewBox="0 0 5 8"><path d="M0.3 0.9 Q2.5 -0.5 4.7 0.9 L4.3 3.3 Q2.5 4.3 0.7 3.3 Z" fill="#b09450"/><ellipse cx="2.5" cy="1.5" rx="1.2" ry="0.8" fill="#ecdca8"/><rect x="1.7" y="3.3" width="1.6" height="4.3" fill="#8e969e"/><rect x="2.1" y="3.6" width="0.5" height="3.6" fill="#c8ced4"/></svg>
<div class="t" style="left:44.80px;top:290.11px;font-size:6.58px;line-height:7.89px;color:#3a3a3a;transform:scaleX(0.9);transform-origin:0 50%;">ВыводНаПринтерФайлБуферОбмена</div>
<svg style="left:359.40px;top:289.20px;" width="10" height="9" viewBox="0 0 10 9"><circle cx="3.1" cy="2.3" r="1.75" fill="#9ca4ac"/><path d="M0.6 6.0 Q0.6 3.1 3.1 3.1 Q5.6 3.1 5.6 6.0 Z" fill="#a8b0b8"/><circle cx="2.5" cy="1.8" r="0.6" fill="#d4dae0"/><rect x="5.2" y="3.9" width="4.4" height="4.6" rx="1.3" fill="#d6c648"/><path d="M7.4 3.9 H8.3 Q9.6 3.9 9.6 5.2 V7.2 Q9.6 8.5 8.3 8.5 H7.4 Z" fill="#bcaa36"/></svg>
<svg style="left:34.70px;top:299.93px;" width="5" height="8" viewBox="0 0 5 8"><path d="M0.3 0.9 Q2.5 -0.5 4.7 0.9 L4.3 3.3 Q2.5 4.3 0.7 3.3 Z" fill="#b09450"/><ellipse cx="2.5" cy="1.5" rx="1.2" ry="0.8" fill="#ecdca8"/><rect x="1.7" y="3.3" width="1.6" height="4.3" fill="#8e969e"/><rect x="2.1" y="3.6" width="0.5" height="3.6" fill="#c8ced4"/></svg>
<div class="t" style="left:44.80px;top:300.24px;font-size:6.58px;line-height:7.89px;color:#3a3a3a;transform:scaleX(0.9);transform-origin:0 50%;">ВыводРеестраДокументов</div>
<svg style="left:359.40px;top:299.33px;" width="10" height="9" viewBox="0 0 10 9"><circle cx="3.1" cy="2.3" r="1.75" fill="#9ca4ac"/><path d="M0.6 6.0 Q0.6 3.1 3.1 3.1 Q5.6 3.1 5.6 6.0 Z" fill="#a8b0b8"/><circle cx="2.5" cy="1.8" r="0.6" fill="#d4dae0"/><rect x="5.2" y="3.9" width="4.4" height="4.6" rx="1.3" fill="#d6c648"/><path d="M7.4 3.9 H8.3 Q9.6 3.9 9.6 5.2 V7.2 Q9.6 8.5 8.3 8.5 H7.4 Z" fill="#bcaa36"/></svg>
<svg style="left:34.70px;top:310.06px;" width="5" height="8" viewBox="0 0 5 8"><path d="M0.3 0.9 Q2.5 -0.5 4.7 0.9 L4.3 3.3 Q2.5 4.3 0.7 3.3 Z" fill="#b09450"/><ellipse cx="2.5" cy="1.5" rx="1.2" ry="0.8" fill="#ecdca8"/><rect x="1.7" y="3.3" width="1.6" height="4.3" fill="#8e969e"/><rect x="2.1" y="3.6" width="0.5" height="3.6" fill="#c8ced4"/></svg>
<div class="t" style="left:44.80px;top:310.37px;font-size:6.58px;line-height:7.89px;color:#3a3a3a;transform:scaleX(0.9);transform-origin:0 50%;">ВызовОнлайнПоддержки</div>
<svg style="left:359.40px;top:309.46px;" width="10" height="9" viewBox="0 0 10 9"><circle cx="3.1" cy="2.3" r="1.75" fill="#9ca4ac"/><path d="M0.6 6.0 Q0.6 3.1 3.1 3.1 Q5.6 3.1 5.6 6.0 Z" fill="#a8b0b8"/><circle cx="2.5" cy="1.8" r="0.6" fill="#d4dae0"/><rect x="5.2" y="3.9" width="4.4" height="4.6" rx="1.3" fill="#d6c648"/><path d="M7.4 3.9 H8.3 Q9.6 3.9 9.6 5.2 V7.2 Q9.6 8.5 8.3 8.5 H7.4 Z" fill="#bcaa36"/></svg>
<svg style="left:34.70px;top:320.19px;" width="5" height="8" viewBox="0 0 5 8"><path d="M0.3 0.9 Q2.5 -0.5 4.7 0.9 L4.3 3.3 Q2.5 4.3 0.7 3.3 Z" fill="#b09450"/><ellipse cx="2.5" cy="1.5" rx="1.2" ry="0.8" fill="#ecdca8"/><rect x="1.7" y="3.3" width="1.6" height="4.3" fill="#8e969e"/><rect x="2.1" y="3.6" width="0.5" height="3.6" fill="#c8ced4"/></svg>
<div class="t" style="left:44.80px;top:320.50px;font-size:6.58px;line-height:7.89px;color:#3a3a3a;transform:scaleX(0.9);transform-origin:0 50%;">ВыполнениеОбменаБизнесСеть</div>
<svg style="left:359.40px;top:319.59px;" width="10" height="9" viewBox="0 0 10 9"><circle cx="3.1" cy="2.3" r="1.75" fill="#9ca4ac"/><path d="M0.6 6.0 Q0.6 3.1 3.1 3.1 Q5.6 3.1 5.6 6.0 Z" fill="#a8b0b8"/><circle cx="2.5" cy="1.8" r="0.6" fill="#d4dae0"/><rect x="5.2" y="3.9" width="4.4" height="4.6" rx="1.3" fill="#d6c648"/><path d="M7.4 3.9 H8.3 Q9.6 3.9 9.6 5.2 V7.2 Q9.6 8.5 8.3 8.5 H7.4 Z" fill="#bcaa36"/></svg>
<svg style="left:34.70px;top:330.32px;" width="5" height="8" viewBox="0 0 5 8"><path d="M0.3 0.9 Q2.5 -0.5 4.7 0.9 L4.3 3.3 Q2.5 4.3 0.7 3.3 Z" fill="#b09450"/><ellipse cx="2.5" cy="1.5" rx="1.2" ry="0.8" fill="#ecdca8"/><rect x="1.7" y="3.3" width="1.6" height="4.3" fill="#8e969e"/><rect x="2.1" y="3.6" width="0.5" height="3.6" fill="#c8ced4"/></svg>
<div class="t" style="left:44.80px;top:330.63px;font-size:6.58px;line-height:7.89px;color:#3a3a3a;transform:scaleX(0.9);transform-origin:0 50%;">ВыполнениеОбменаЭД</div>
<svg style="left:359.40px;top:329.72px;" width="10" height="9" viewBox="0 0 10 9"><circle cx="3.1" cy="2.3" r="1.75" fill="#9ca4ac"/><path d="M0.6 6.0 Q0.6 3.1 3.1 3.1 Q5.6 3.1 5.6 6.0 Z" fill="#a8b0b8"/><circle cx="2.5" cy="1.8" r="0.6" fill="#d4dae0"/><rect x="5.2" y="3.9" width="4.4" height="4.6" rx="1.3" fill="#d6c648"/><path d="M7.4 3.9 H8.3 Q9.6 3.9 9.6 5.2 V7.2 Q9.6 8.5 8.3 8.5 H7.4 Z" fill="#bcaa36"/></svg>
<svg style="left:34.70px;top:340.45px;" width="5" height="8" viewBox="0 0 5 8"><path d="M0.3 0.9 Q2.5 -0.5 4.7 0.9 L4.3 3.3 Q2.5 4.3 0.7 3.3 Z" fill="#b09450"/><ellipse cx="2.5" cy="1.5" rx="1.2" ry="0.8" fill="#ecdca8"/><rect x="1.7" y="3.3" width="1.6" height="4.3" fill="#8e969e"/><rect x="2.1" y="3.6" width="0.5" height="3.6" fill="#c8ced4"/></svg>
<div class="t" style="left:44.80px;top:340.76px;font-size:6.58px;line-height:7.89px;color:#3a3a3a;transform:scaleX(0.9);transform-origin:0 50%;">ВыполнениеСинхронизацииДанных</div>
<svg style="left:359.40px;top:339.85px;" width="10" height="9" viewBox="0 0 10 9"><circle cx="3.1" cy="2.3" r="1.75" fill="#9ca4ac"/><path d="M0.6 6.0 Q0.6 3.1 3.1 3.1 Q5.6 3.1 5.6 6.0 Z" fill="#a8b0b8"/><circle cx="2.5" cy="1.8" r="0.6" fill="#d4dae0"/><rect x="5.2" y="3.9" width="4.4" height="4.6" rx="1.3" fill="#d6c648"/><path d="M7.4 3.9 H8.3 Q9.6 3.9 9.6 5.2 V7.2 Q9.6 8.5 8.3 8.5 H7.4 Z" fill="#bcaa36"/></svg>
<svg style="left:34.70px;top:350.58px;" width="5" height="8" viewBox="0 0 5 8"><path d="M0.3 0.9 Q2.5 -0.5 4.7 0.9 L4.3 3.3 Q2.5 4.3 0.7 3.3 Z" fill="#b09450"/><ellipse cx="2.5" cy="1.5" rx="1.2" ry="0.8" fill="#ecdca8"/><rect x="1.7" y="3.3" width="1.6" height="4.3" fill="#8e969e"/><rect x="2.1" y="3.6" width="0.5" height="3.6" fill="#c8ced4"/></svg>
<div class="t" style="left:44.80px;top:350.89px;font-size:6.58px;line-height:7.89px;color:#3a3a3a;transform:scaleX(0.9);transform-origin:0 50%;">ДобавлениеИзменениеАдресныхСведений</div>
<svg style="left:359.40px;top:349.98px;" width="10" height="9" viewBox="0 0 10 9"><circle cx="3.1" cy="2.3" r="1.75" fill="#9ca4ac"/><path d="M0.6 6.0 Q0.6 3.1 3.1 3.1 Q5.6 3.1 5.6 6.0 Z" fill="#a8b0b8"/><circle cx="2.5" cy="1.8" r="0.6" fill="#d4dae0"/><rect x="5.2" y="3.9" width="4.4" height="4.6" rx="1.3" fill="#d6c648"/><path d="M7.4 3.9 H8.3 Q9.6 3.9 9.6 5.2 V7.2 Q9.6 8.5 8.3 8.5 H7.4 Z" fill="#bcaa36"/></svg>
<svg style="left:34.70px;top:360.71px;" width="5" height="8" viewBox="0 0 5 8"><path d="M0.3 0.9 Q2.5 -0.5 4.7 0.9 L4.3 3.3 Q2.5 4.3 0.7 3.3 Z" fill="#b09450"/><ellipse cx="2.5" cy="1.5" rx="1.2" ry="0.8" fill="#ecdca8"/><rect x="1.7" y="3.3" width="1.6" height="4.3" fill="#8e969e"/><rect x="2.1" y="3.6" width="0.5" height="3.6" fill="#c8ced4"/></svg>
<div class="t" style="left:44.80px;top:361.02px;font-size:6.58px;line-height:7.89px;color:#3a3a3a;transform:scaleX(0.9);transform-origin:0 50%;">ДобавлениеИзменениеАктовПостановкиНаБалансЕГАИС</div>
<svg style="left:359.40px;top:360.11px;" width="10" height="9" viewBox="0 0 10 9"><circle cx="3.1" cy="2.3" r="1.75" fill="#9ca4ac"/><path d="M0.6 6.0 Q0.6 3.1 3.1 3.1 Q5.6 3.1 5.6 6.0 Z" fill="#a8b0b8"/><circle cx="2.5" cy="1.8" r="0.6" fill="#d4dae0"/><rect x="5.2" y="3.9" width="4.4" height="4.6" rx="1.3" fill="#d6c648"/><path d="M7.4 3.9 H8.3 Q9.6 3.9 9.6 5.2 V7.2 Q9.6 8.5 8.3 8.5 H7.4 Z" fill="#bcaa36"/></svg>
<svg style="left:34.70px;top:370.84px;" width="5" height="8" viewBox="0 0 5 8"><path d="M0.3 0.9 Q2.5 -0.5 4.7 0.9 L4.3 3.3 Q2.5 4.3 0.7 3.3 Z" fill="#b09450"/><ellipse cx="2.5" cy="1.5" rx="1.2" ry="0.8" fill="#ecdca8"/><rect x="1.7" y="3.3" width="1.6" height="4.3" fill="#8e969e"/><rect x="2.1" y="3.6" width="0.5" height="3.6" fill="#c8ced4"/></svg>
<div class="t" style="left:44.80px;top:371.15px;font-size:6.58px;line-height:7.89px;color:#3a3a3a;transform:scaleX(0.9);transform-origin:0 50%;">ДобавлениеИзменениеАктовСписанияЕГАИС</div>
<svg style="left:359.40px;top:370.24px;" width="10" height="9" viewBox="0 0 10 9"><circle cx="3.1" cy="2.3" r="1.75" fill="#9ca4ac"/><path d="M0.6 6.0 Q0.6 3.1 3.1 3.1 Q5.6 3.1 5.6 6.0 Z" fill="#a8b0b8"/><circle cx="2.5" cy="1.8" r="0.6" fill="#d4dae0"/><rect x="5.2" y="3.9" width="4.4" height="4.6" rx="1.3" fill="#d6c648"/><path d="M7.4 3.9 H8.3 Q9.6 3.9 9.6 5.2 V7.2 Q9.6 8.5 8.3 8.5 H7.4 Z" fill="#bcaa36"/></svg>
<svg style="left:34.70px;top:380.97px;" width="5" height="8" viewBox="0 0 5 8"><path d="M0.3 0.9 Q2.5 -0.5 4.7 0.9 L4.3 3.3 Q2.5 4.3 0.7 3.3 Z" fill="#b09450"/><ellipse cx="2.5" cy="1.5" rx="1.2" ry="0.8" fill="#ecdca8"/><rect x="1.7" y="3.3" width="1.6" height="4.3" fill="#8e969e"/><rect x="2.1" y="3.6" width="0.5" height="3.6" fill="#c8ced4"/></svg>
<div class="t" style="left:44.80px;top:381.28px;font-size:6.58px;line-height:7.89px;color:#3a3a3a;transform:scaleX(0.9);transform-origin:0 50%;">ДобавлениеИзменениеАктСверкиВзаиморасчетов</div>
<svg style="left:359.40px;top:380.37px;" width="10" height="9" viewBox="0 0 10 9"><circle cx="3.1" cy="2.3" r="1.75" fill="#9ca4ac"/><path d="M0.6 6.0 Q0.6 3.1 3.1 3.1 Q5.6 3.1 5.6 6.0 Z" fill="#a8b0b8"/><circle cx="2.5" cy="1.8" r="0.6" fill="#d4dae0"/><rect x="5.2" y="3.9" width="4.4" height="4.6" rx="1.3" fill="#d6c648"/><path d="M7.4 3.9 H8.3 Q9.6 3.9 9.6 5.2 V7.2 Q9.6 8.5 8.3 8.5 H7.4 Z" fill="#bcaa36"/></svg>
<svg style="left:34.70px;top:391.10px;" width="5" height="8" viewBox="0 0 5 8"><path d="M0.3 0.9 Q2.5 -0.5 4.7 0.9 L4.3 3.3 Q2.5 4.3 0.7 3.3 Z" fill="#b09450"/><ellipse cx="2.5" cy="1.5" rx="1.2" ry="0.8" fill="#ecdca8"/><rect x="1.7" y="3.3" width="1.6" height="4.3" fill="#8e969e"/><rect x="2.1" y="3.6" width="0.5" height="3.6" fill="#c8ced4"/></svg>
<div class="t" style="left:44.80px;top:391.41px;font-size:6.58px;line-height:7.89px;color:#3a3a3a;transform:scaleX(0.9);transform-origin:0 50%;">ДобавлениеИзменениеАнкетПерсУчета</div>
<svg style="left:359.40px;top:390.50px;" width="10" height="9" viewBox="0 0 10 9"><circle cx="3.1" cy="2.3" r="1.75" fill="#9ca4ac"/><path d="M0.6 6.0 Q0.6 3.1 3.1 3.1 Q5.6 3.1 5.6 6.0 Z" fill="#a8b0b8"/><circle cx="2.5" cy="1.8" r="0.6" fill="#d4dae0"/><rect x="5.2" y="3.9" width="4.4" height="4.6" rx="1.3" fill="#d6c648"/><path d="M7.4 3.9 H8.3 Q9.6 3.9 9.6 5.2 V7.2 Q9.6 8.5 8.3 8.5 H7.4 Z" fill="#bcaa36"/></svg>
<svg style="left:34.70px;top:401.23px;" width="5" height="8" viewBox="0 0 5 8"><path d="M0.3 0.9 Q2.5 -0.5 4.7 0.9 L4.3 3.3 Q2.5 4.3 0.7 3.3 Z" fill="#b09450"/><ellipse cx="2.5" cy="1.5" rx="1.2" ry="0.8" fill="#ecdca8"/><rect x="1.7" y="3.3" width="1.6" height="4.3" fill="#8e969e"/><rect x="2.1" y="3.6" width="0.5" height="3.6" fill="#c8ced4"/></svg>
<div class="t" style="left:44.80px;top:401.54px;font-size:6.58px;line-height:7.89px;color:#3a3a3a;transform:scaleX(0.9);transform-origin:0 50%;">ДобавлениеИзменениеБанков</div>
<svg style="left:359.40px;top:400.63px;" width="10" height="9" viewBox="0 0 10 9"><circle cx="3.1" cy="2.3" r="1.75" fill="#9ca4ac"/><path d="M0.6 6.0 Q0.6 3.1 3.1 3.1 Q5.6 3.1 5.6 6.0 Z" fill="#a8b0b8"/><circle cx="2.5" cy="1.8" r="0.6" fill="#d4dae0"/><rect x="5.2" y="3.9" width="4.4" height="4.6" rx="1.3" fill="#d6c648"/><path d="M7.4 3.9 H8.3 Q9.6 3.9 9.6 5.2 V7.2 Q9.6 8.5 8.3 8.5 H7.4 Z" fill="#bcaa36"/></svg>
<svg style="left:34.70px;top:411.36px;" width="5" height="8" viewBox="0 0 5 8"><path d="M0.3 0.9 Q2.5 -0.5 4.7 0.9 L4.3 3.3 Q2.5 4.3 0.7 3.3 Z" fill="#b09450"/><ellipse cx="2.5" cy="1.5" rx="1.2" ry="0.8" fill="#ecdca8"/><rect x="1.7" y="3.3" width="1.6" height="4.3" fill="#8e969e"/><rect x="2.1" y="3.6" width="0.5" height="3.6" fill="#c8ced4"/></svg>
<div style="left:43.50px;top:410.36px;width:118.20px;height:9.70px;background:#6f94cc"></div>
<div class="t" style="left:44.80px;top:411.67px;font-size:6.58px;line-height:7.89px;color:#e8eef8;transform:scaleX(0.9);transform-origin:0 50%;">ДобавлениеИзменениеБанковскихСчетов</div>
<svg style="left:359.40px;top:410.76px;" width="10" height="9" viewBox="0 0 10 9"><circle cx="3.1" cy="2.3" r="1.75" fill="#9ca4ac"/><path d="M0.6 6.0 Q0.6 3.1 3.1 3.1 Q5.6 3.1 5.6 6.0 Z" fill="#a8b0b8"/><circle cx="2.5" cy="1.8" r="0.6" fill="#d4dae0"/><rect x="5.2" y="3.9" width="4.4" height="4.6" rx="1.3" fill="#d6c648"/><path d="M7.4 3.9 H8.3 Q9.6 3.9 9.6 5.2 V7.2 Q9.6 8.5 8.3 8.5 H7.4 Z" fill="#bcaa36"/></svg>
<svg style="left:34.70px;top:421.49px;" width="5" height="8" viewBox="0 0 5 8"><path d="M0.3 0.9 Q2.5 -0.5 4.7 0.9 L4.3 3.3 Q2.5 4.3 0.7 3.3 Z" fill="#b09450"/><ellipse cx="2.5" cy="1.5" rx="1.2" ry="0.8" fill="#ecdca8"/><rect x="1.7" y="3.3" width="1.6" height="4.3" fill="#8e969e"/><rect x="2.1" y="3.6" width="0.5" height="3.6" fill="#c8ced4"/></svg>
<div class="t" style="left:44.80px;top:421.80px;font-size:6.58px;line-height:7.89px;color:#3a3a3a;transform:scaleX(0.9);transform-origin:0 50%;">ДобавлениеИзменениеБухгалтерскогоУчетаЗарплаты</div>
<svg style="left:359.40px;top:420.89px;" width="10" height="9" viewBox="0 0 10 9"><circle cx="3.1" cy="2.3" r="1.75" fill="#9ca4ac"/><path d="M0.6 6.0 Q0.6 3.1 3.1 3.1 Q5.6 3.1 5.6 6.0 Z" fill="#a8b0b8"/><circle cx="2.5" cy="1.8" r="0.6" fill="#d4dae0"/><rect x="5.2" y="3.9" width="4.4" height="4.6" rx="1.3" fill="#d6c648"/><path d="M7.4 3.9 H8.3 Q9.6 3.9 9.6 5.2 V7.2 Q9.6 8.5 8.3 8.5 H7.4 Z" fill="#bcaa36"/></svg>
<svg style="left:34.70px;top:431.62px;" width="5" height="8" viewBox="0 0 5 8"><path d="M0.3 0.9 Q2.5 -0.5 4.7 0.9 L4.3 3.3 Q2.5 4.3 0.7 3.3 Z" fill="#b09450"/><ellipse cx="2.5" cy="1.5" rx="1.2" ry="0.8" fill="#ecdca8"/><rect x="1.7" y="3.3" width="1.6" height="4.3" fill="#8e969e"/><rect x="2.1" y="3.6" width="0.5" height="3.6" fill="#c8ced4"/></svg>
<div class="t" style="left:44.80px;top:431.93px;font-size:6.58px;line-height:7.89px;color:#3a3a3a;transform:scaleX(0.9);transform-origin:0 50%;">ДобавлениеИзменениеВариантовОтчетов</div>
<svg style="left:359.40px;top:431.02px;" width="10" height="9" viewBox="0 0 10 9"><circle cx="3.1" cy="2.3" r="1.75" fill="#9ca4ac"/><path d="M0.6 6.0 Q0.6 3.1 3.1 3.1 Q5.6 3.1 5.6 6.0 Z" fill="#a8b0b8"/><circle cx="2.5" cy="1.8" r="0.6" fill="#d4dae0"/><rect x="5.2" y="3.9" width="4.4" height="4.6" rx="1.3" fill="#d6c648"/><path d="M7.4 3.9 H8.3 Q9.6 3.9 9.6 5.2 V7.2 Q9.6 8.5 8.3 8.5 H7.4 Z" fill="#bcaa36"/></svg>
<svg style="left:34.70px;top:441.75px;" width="5" height="8" viewBox="0 0 5 8"><path d="M0.3 0.9 Q2.5 -0.5 4.7 0.9 L4.3 3.3 Q2.5 4.3 0.7 3.3 Z" fill="#b09450"/><ellipse cx="2.5" cy="1.5" rx="1.2" ry="0.8" fill="#ecdca8"/><rect x="1.7" y="3.3" width="1.6" height="4.3" fill="#8e969e"/><rect x="2.1" y="3.6" width="0.5" height="3.6" fill="#c8ced4"/></svg>
<div class="t" style="left:44.80px;top:442.06px;font-size:6.58px;line-height:7.89px;color:#3a3a3a;transform:scaleX(0.9);transform-origin:0 50%;">ДобавлениеИзменениеВидовАлкогольнойПродукцииЕГАИС</div>
<svg style="left:359.40px;top:441.15px;" width="10" height="9" viewBox="0 0 10 9"><circle cx="3.1" cy="2.3" r="1.75" fill="#9ca4ac"/><path d="M0.6 6.0 Q0.6 3.1 3.1 3.1 Q5.6 3.1 5.6 6.0 Z" fill="#a8b0b8"/><circle cx="2.5" cy="1.8" r="0.6" fill="#d4dae0"/><rect x="5.2" y="3.9" width="4.4" height="4.6" rx="1.3" fill="#d6c648"/><path d="M7.4 3.9 H8.3 Q9.6 3.9 9.6 5.2 V7.2 Q9.6 8.5 8.3 8.5 H7.4 Z" fill="#bcaa36"/></svg>
<svg style="left:34.70px;top:451.88px;" width="5" height="8" viewBox="0 0 5 8"><path d="M0.3 0.9 Q2.5 -0.5 4.7 0.9 L4.3 3.3 Q2.5 4.3 0.7 3.3 Z" fill="#b09450"/><ellipse cx="2.5" cy="1.5" rx="1.2" ry="0.8" fill="#ecdca8"/><rect x="1.7" y="3.3" width="1.6" height="4.3" fill="#8e969e"/><rect x="2.1" y="3.6" width="0.5" height="3.6" fill="#c8ced4"/></svg>
<div class="t" style="left:44.80px;top:452.19px;font-size:6.58px;line-height:7.89px;color:#3a3a3a;transform:scaleX(0.9);transform-origin:0 50%;">ДобавлениеИзменениеВидовКонтактнойИнформации</div>
<svg style="left:359.40px;top:451.28px;" width="10" height="9" viewBox="0 0 10 9"><circle cx="3.1" cy="2.3" r="1.75" fill="#9ca4ac"/><path d="M0.6 6.0 Q0.6 3.1 3.1 3.1 Q5.6 3.1 5.6 6.0 Z" fill="#a8b0b8"/><circle cx="2.5" cy="1.8" r="0.6" fill="#d4dae0"/><rect x="5.2" y="3.9" width="4.4" height="4.6" rx="1.3" fill="#d6c648"/><path d="M7.4 3.9 H8.3 Q9.6 3.9 9.6 5.2 V7.2 Q9.6 8.5 8.3 8.5 H7.4 Z" fill="#bcaa36"/></svg>
<svg style="left:34.70px;top:462.01px;" width="5" height="8" viewBox="0 0 5 8"><path d="M0.3 0.9 Q2.5 -0.5 4.7 0.9 L4.3 3.3 Q2.5 4.3 0.7 3.3 Z" fill="#b09450"/><ellipse cx="2.5" cy="1.5" rx="1.2" ry="0.8" fill="#ecdca8"/><rect x="1.7" y="3.3" width="1.6" height="4.3" fill="#8e969e"/><rect x="2.1" y="3.6" width="0.5" height="3.6" fill="#c8ced4"/></svg>
<div class="t" style="left:44.80px;top:462.31px;font-size:6.58px;line-height:7.89px;color:#3a3a3a;transform:scaleX(0.9);transform-origin:0 50%;">ДобавлениеИзменениеВнешнихПользователей</div>
<svg style="left:359.40px;top:461.41px;" width="10" height="9" viewBox="0 0 10 9"><circle cx="3.1" cy="2.3" r="1.75" fill="#9ca4ac"/><path d="M0.6 6.0 Q0.6 3.1 3.1 3.1 Q5.6 3.1 5.6 6.0 Z" fill="#a8b0b8"/><circle cx="2.5" cy="1.8" r="0.6" fill="#d4dae0"/><rect x="5.2" y="3.9" width="4.4" height="4.6" rx="1.3" fill="#d6c648"/><path d="M7.4 3.9 H8.3 Q9.6 3.9 9.6 5.2 V7.2 Q9.6 8.5 8.3 8.5 H7.4 Z" fill="#bcaa36"/></svg>
<svg style="left:34.70px;top:472.14px;" width="5" height="8" viewBox="0 0 5 8"><path d="M0.3 0.9 Q2.5 -0.5 4.7 0.9 L4.3 3.3 Q2.5 4.3 0.7 3.3 Z" fill="#b09450"/><ellipse cx="2.5" cy="1.5" rx="1.2" ry="0.8" fill="#ecdca8"/><rect x="1.7" y="3.3" width="1.6" height="4.3" fill="#8e969e"/><rect x="2.1" y="3.6" width="0.5" height="3.6" fill="#c8ced4"/></svg>
<div class="t" style="left:44.80px;top:472.45px;font-size:6.58px;line-height:7.89px;color:#3a3a3a;transform:scaleX(0.9);transform-origin:0 50%;">ДобавлениеИзменениеВозвратовИзРегистра2ЕГАИС</div>
<svg style="left:359.40px;top:471.54px;" width="10" height="9" viewBox="0 0 10 9"><circle cx="3.1" cy="2.3" r="1.75" fill="#9ca4ac"/><path d="M0.6 6.0 Q0.6 3.1 3.1 3.1 Q5.6 3.1 5.6 6.0 Z" fill="#a8b0b8"/><circle cx="2.5" cy="1.8" r="0.6" fill="#d4dae0"/><rect x="5.2" y="3.9" width="4.4" height="4.6" rx="1.3" fill="#d6c648"/><path d="M7.4 3.9 H8.3 Q9.6 3.9 9.6 5.2 V7.2 Q9.6 8.5 8.3 8.5 H7.4 Z" fill="#bcaa36"/></svg>
<svg style="left:34.70px;top:482.27px;" width="5" height="8" viewBox="0 0 5 8"><path d="M0.3 0.9 Q2.5 -0.5 4.7 0.9 L4.3 3.3 Q2.5 4.3 0.7 3.3 Z" fill="#b09450"/><ellipse cx="2.5" cy="1.5" rx="1.2" ry="0.8" fill="#ecdca8"/><rect x="1.7" y="3.3" width="1.6" height="4.3" fill="#8e969e"/><rect x="2.1" y="3.6" width="0.5" height="3.6" fill="#c8ced4"/></svg>
<div class="t" style="left:44.80px;top:482.58px;font-size:6.58px;line-height:7.89px;color:#3a3a3a;transform:scaleX(0.9);transform-origin:0 50%;">ДобавлениеИзменениеВозвратТоваровОтПокупателя</div>
<svg style="left:359.40px;top:481.67px;" width="10" height="9" viewBox="0 0 10 9"><circle cx="3.1" cy="2.3" r="1.75" fill="#9ca4ac"/><path d="M0.6 6.0 Q0.6 3.1 3.1 3.1 Q5.6 3.1 5.6 6.0 Z" fill="#a8b0b8"/><circle cx="2.5" cy="1.8" r="0.6" fill="#d4dae0"/><rect x="5.2" y="3.9" width="4.4" height="4.6" rx="1.3" fill="#d6c648"/><path d="M7.4 3.9 H8.3 Q9.6 3.9 9.6 5.2 V7.2 Q9.6 8.5 8.3 8.5 H7.4 Z" fill="#bcaa36"/></svg>
<svg style="left:34.70px;top:492.40px;" width="5" height="8" viewBox="0 0 5 8"><path d="M0.3 0.9 Q2.5 -0.5 4.7 0.9 L4.3 3.3 Q2.5 4.3 0.7 3.3 Z" fill="#b09450"/><ellipse cx="2.5" cy="1.5" rx="1.2" ry="0.8" fill="#ecdca8"/><rect x="1.7" y="3.3" width="1.6" height="4.3" fill="#8e969e"/><rect x="2.1" y="3.6" width="0.5" height="3.6" fill="#c8ced4"/></svg>
<div class="t" style="left:44.80px;top:492.71px;font-size:6.58px;line-height:7.89px;color:#3a3a3a;transform:scaleX(0.9);transform-origin:0 50%;">ДобавлениеИзменениеВходящихТТНЕГАИС</div>
<svg style="left:359.40px;top:491.80px;" width="10" height="9" viewBox="0 0 10 9"><circle cx="3.1" cy="2.3" r="1.75" fill="#9ca4ac"/><path d="M0.6 6.0 Q0.6 3.1 3.1 3.1 Q5.6 3.1 5.6 6.0 Z" fill="#a8b0b8"/><circle cx="2.5" cy="1.8" r="0.6" fill="#d4dae0"/><rect x="5.2" y="3.9" width="4.4" height="4.6" rx="1.3" fill="#d6c648"/><path d="M7.4 3.9 H8.3 Q9.6 3.9 9.6 5.2 V7.2 Q9.6 8.5 8.3 8.5 H7.4 Z" fill="#bcaa36"/></svg>
<svg style="left:34.70px;top:502.53px;" width="5" height="8" viewBox="0 0 5 8"><path d="M0.3 0.9 Q2.5 -0.5 4.7 0.9 L4.3 3.3 Q2.5 4.3 0.7 3.3 Z" fill="#b09450"/><ellipse cx="2.5" cy="1.5" rx="1.2" ry="0.8" fill="#ecdca8"/><rect x="1.7" y="3.3" width="1.6" height="4.3" fill="#8e969e"/><rect x="2.1" y="3.6" width="0.5" height="3.6" fill="#c8ced4"/></svg>
<div class="t" style="left:44.80px;top:502.84px;font-size:6.58px;line-height:7.89px;color:#3a3a3a;transform:scaleX(0.9);transform-origin:0 50%;">ДобавлениеИзменениеВыплаченнойЗарплаты</div>
<svg style="left:359.40px;top:501.93px;" width="10" height="9" viewBox="0 0 10 9"><circle cx="3.1" cy="2.3" r="1.75" fill="#9ca4ac"/><path d="M0.6 6.0 Q0.6 3.1 3.1 3.1 Q5.6 3.1 5.6 6.0 Z" fill="#a8b0b8"/><circle cx="2.5" cy="1.8" r="0.6" fill="#d4dae0"/><rect x="5.2" y="3.9" width="4.4" height="4.6" rx="1.3" fill="#d6c648"/><path d="M7.4 3.9 H8.3 Q9.6 3.9 9.6 5.2 V7.2 Q9.6 8.5 8.3 8.5 H7.4 Z" fill="#bcaa36"/></svg>
<svg style="left:34.70px;top:512.66px;" width="5" height="8" viewBox="0 0 5 8"><path d="M0.3 0.9 Q2.5 -0.5 4.7 0.9 L4.3 3.3 Q2.5 4.3 0.7 3.3 Z" fill="#b09450"/><ellipse cx="2.5" cy="1.5" rx="1.2" ry="0.8" fill="#ecdca8"/><rect x="1.7" y="3.3" width="1.6" height="4.3" fill="#8e969e"/><rect x="2.1" y="3.6" width="0.5" height="3.6" fill="#c8ced4"/></svg>
<div class="t" style="left:44.80px;top:512.97px;font-size:6.58px;line-height:7.89px;color:#3a3a3a;transform:scaleX(0.9);transform-origin:0 50%;">ДобавлениеИзменениеДанныхБухгалтерии</div>
<svg style="left:359.40px;top:512.06px;" width="10" height="9" viewBox="0 0 10 9"><circle cx="3.1" cy="2.3" r="1.75" fill="#9ca4ac"/><path d="M0.6 6.0 Q0.6 3.1 3.1 3.1 Q5.6 3.1 5.6 6.0 Z" fill="#a8b0b8"/><circle cx="2.5" cy="1.8" r="0.6" fill="#d4dae0"/><rect x="5.2" y="3.9" width="4.4" height="4.6" rx="1.3" fill="#d6c648"/><path d="M7.4 3.9 H8.3 Q9.6 3.9 9.6 5.2 V7.2 Q9.6 8.5 8.3 8.5 H7.4 Z" fill="#bcaa36"/></svg>
<svg style="left:34.70px;top:522.79px;" width="5" height="8" viewBox="0 0 5 8"><path d="M0.3 0.9 Q2.5 -0.5 4.7 0.9 L4.3 3.3 Q2.5 4.3 0.7 3.3 Z" fill="#b09450"/><ellipse cx="2.5" cy="1.5" rx="1.2" ry="0.8" fill="#ecdca8"/><rect x="1.7" y="3.3" width="1.6" height="4.3" fill="#8e969e"/><rect x="2.1" y="3.6" width="0.5" height="3.6" fill="#c8ced4"/></svg>
<div class="t" style="left:44.80px;top:523.10px;font-size:6.58px;line-height:7.89px;color:#3a3a3a;transform:scaleX(0.9);transform-origin:0 50%;">ДобавлениеИзменениеДанныхДляНачисленияЗарплаты</div>
<svg style="left:359.40px;top:522.19px;" width="10" height="9" viewBox="0 0 10 9"><circle cx="3.1" cy="2.3" r="1.75" fill="#9ca4ac"/><path d="M0.6 6.0 Q0.6 3.1 3.1 3.1 Q5.6 3.1 5.6 6.0 Z" fill="#a8b0b8"/><circle cx="2.5" cy="1.8" r="0.6" fill="#d4dae0"/><rect x="5.2" y="3.9" width="4.4" height="4.6" rx="1.3" fill="#d6c648"/><path d="M7.4 3.9 H8.3 Q9.6 3.9 9.6 5.2 V7.2 Q9.6 8.5 8.3 8.5 H7.4 Z" fill="#bcaa36"/></svg>
<div style="left:382.00px;top:52.00px;width:641.00px;height:477.00px;background:#f9f7ea;border-left:1px solid #868680;border-top:1px solid #8e8e86;box-sizing:border-box"></div>
<div style="left:383.00px;top:53.00px;width:640.00px;height:13.30px;background:#f3f1e0"></div>
<div class="t" style="left:385.00px;top:55.95px;font-size:6.50px;line-height:7.80px;color:#3a3a3a;transform:scaleX(0.9);transform-origin:0 50%;">Действия</div>
<svg style="left:413.60px;top:59.30px;" width="4" height="3" viewBox="0 0 4 3"><path d="M0.2 0.3 H3.4 L1.8 2.4 Z" fill="#333"/></svg>
<div style="left:419.30px;top:55.00px;width:0.60px;height:10.00px;background:#c8c4b0"></div>
<svg style="left:422.50px;top:55.50px;" width="9" height="9" viewBox="0 0 9 9"><path d="M0.5 0.8 H7.5 L4.8 4 V7.5 L3.2 6.5 V4 Z" fill="#e8e8e0" stroke="#888" stroke-width="0.6"/><circle cx="6.3" cy="6.8" r="1.2" fill="#9a9"/></svg>
<div style="left:386.30px;top:78.50px;width:632.60px;height:412.50px;background:#faf8ec;border:0.7px solid #cfcab4;box-sizing:border-box"></div>
<div style="left:386.30px;top:69.40px;width:27.50px;height:10.80px;background:#faf8ec;border:0.7px solid #cfcab4;border-bottom:none;border-radius:2.5px 2.5px 0 0;box-sizing:border-box"></div>
<div class="t" style="left:392.00px;top:70.95px;font-size:6.50px;line-height:7.80px;color:#3a3a3a;transform:scaleX(0.9);transform-origin:0 50%;">Права</div>
<div style="left:417.00px;top:69.60px;width:71.00px;height:9.00px;background:#ece7cf;border:0.7px solid #d4cfb8;border-bottom:none;border-radius:2.5px 2.5px 0 0;box-sizing:border-box"></div>
<div class="t" style="left:422.00px;top:70.95px;font-size:6.50px;line-height:7.80px;color:#5a5a50;transform:scaleX(0.9);transform-origin:0 50%;">Шаблоны ограничений</div>
<div class="t" style="left:389.70px;top:85.85px;font-size:6.50px;line-height:7.80px;color:#444;transform:scaleX(0.9);transform-origin:0 50%;">Объекты:</div>
<div style="left:390.30px;top:95.60px;width:243.50px;height:373.80px;background:#fff;border:0.7px solid #cfcab4;box-sizing:border-box"></div>
<div style="left:624.00px;top:96.20px;width:9.20px;height:372.60px;background:#f8f6ec;border-left:0.5px solid #e0dccc;box-sizing:border-box"></div>
<div style="left:624.30px;top:96.20px;width:8.90px;height:11.00px;background:#f2efe2;border-bottom:0.5px solid #dcd8c4"></div>
<div style="left:624.30px;top:107.20px;width:8.90px;height:36.00px;background:linear-gradient(90deg,#f4f0da,#ebe5c8);border-bottom:0.5px solid #e0dcc4"></div>
<svg style="left:626.50px;top:123.50px;" width="4" height="4" viewBox="0 0 4 4"><path d="M0.5 2 H3.5" stroke="#c8c4a8" stroke-width="0.5"/></svg>
<div style="left:624.30px;top:458.00px;width:8.90px;height:11.00px;background:#f2efe2;border-top:0.5px solid #dcd8c4"></div>
<svg style="left:626.30px;top:462.00px;" width="5" height="4" viewBox="0 0 5 4"><path d="M0.5 0.5 H4.5 L2.5 3 Z" fill="#666"/></svg>
<svg style="left:626.30px;top:99.50px;" width="5" height="4" viewBox="0 0 5 4"><path d="M0.5 3 H4.5 L2.5 0.5 Z" fill="#ccc"/></svg>
<svg style="left:392.80px;top:97.90px;" width="7.0" height="7.0" viewBox="0 0 7.0 7.0"><circle cx="3.5" cy="3.5" r="3.0" fill="#e0c040"/><ellipse cx="3.5" cy="3.0" rx="2.25" ry="1.35" fill="#f4e08a"/></svg>
<div class="t" style="left:404.50px;top:98.05px;font-size:6.50px;line-height:7.80px;color:#3a3a3a;transform:scaleX(0.9);transform-origin:0 50%;">БухгалтерияПредприятия</div>
<svg style="left:393.00px;top:108.00px;" width="7" height="7" viewBox="0 0 7 7"><circle cx="3.5" cy="3.5" r="2.7" fill="#fff" stroke="#c0c0c0" stroke-width="0.7"/><path d="M2 3.5 H5" stroke="#8a8a8a" stroke-width="0.65"/><path d="M3.5 2 V5" stroke="#8a8a8a" stroke-width="0.65"/></svg>
<svg style="left:402.50px;top:107.51px;" width="8" height="8" viewBox="0 0 8 8"><circle cx="3" cy="1.9" r="1.6" fill="#5a8ab8"/><circle cx="2" cy="5.8" r="1.7" fill="#5aaa40"/><circle cx="6" cy="4.6" r="1.4" fill="#a07a60"/></svg>
<div class="t" style="left:414.10px;top:108.16px;font-size:6.50px;line-height:7.80px;color:#3a3a3a;transform:scaleX(0.9);transform-origin:0 50%;">Общие</div>
<svg style="left:393.00px;top:118.00px;" width="7" height="7" viewBox="0 0 7 7"><circle cx="3.5" cy="3.5" r="2.7" fill="#fff" stroke="#c0c0c0" stroke-width="0.7"/><path d="M2 3.5 H5" stroke="#8a8a8a" stroke-width="0.65"/><path d="M3.5 2 V5" stroke="#8a8a8a" stroke-width="0.65"/></svg>
<div class="t" style="left:414.10px;top:118.27px;font-size:6.50px;line-height:7.80px;color:#3a3a3a;transform:scaleX(0.9);transform-origin:0 50%;">Константы</div>
<svg style="left:403.00px;top:117.82px;" width="8" height="8" viewBox="0 0 8 8"><rect x="0.3" y="2.5" width="3.4" height="5.1" fill="#5a88bc"/><rect x="0.8" y="3" width="1.4" height="1.8" fill="#9cc0e0"/><rect x="3.8" y="5.0" width="3.2" height="2.6" fill="#5a88bc"/><rect x="4.2" y="0.3" width="3.4" height="3.6" fill="#eef4fa" stroke="#5a88bc" stroke-width="0.8"/></svg>
<svg style="left:393.00px;top:128.00px;" width="7" height="7" viewBox="0 0 7 7"><circle cx="3.5" cy="3.5" r="2.7" fill="#fff" stroke="#c0c0c0" stroke-width="0.7"/><path d="M2 3.5 H5" stroke="#8a8a8a" stroke-width="0.65"/></svg>
<svg style="left:403.20px;top:128.43px;" width="8" height="7" viewBox="0 0 8 7"><rect x="0.4" y="0.4" width="7.2" height="6.2" fill="#f4f4f2" stroke="#b4bac4" stroke-width="0.7"/><rect x="0.8" y="0.8" width="6.4" height="1.5" fill="#d0cc98"/><path d="M2.9 0.8 V6.4 M5.1 0.8 V6.4" stroke="#b4bac4" stroke-width="0.6"/></svg>
<div class="t" style="left:414.10px;top:128.38px;font-size:6.50px;line-height:7.80px;color:#3a3a3a;transform:scaleX(0.9);transform-origin:0 50%;">Справочники</div>
<svg style="left:403.00px;top:138.00px;" width="7" height="7" viewBox="0 0 7 7"><circle cx="3.5" cy="3.5" r="2.7" fill="#fff" stroke="#c0c0c0" stroke-width="0.7"/><path d="M2 3.5 H5" stroke="#8a8a8a" stroke-width="0.65"/><path d="M3.5 2 V5" stroke="#8a8a8a" stroke-width="0.65"/></svg>
<svg style="left:413.40px;top:138.54px;" width="8" height="7" viewBox="0 0 8 7"><rect x="0.4" y="0.4" width="7.2" height="6.2" fill="#f4f4f2" stroke="#b4bac4" stroke-width="0.7"/><rect x="0.8" y="0.8" width="6.4" height="1.5" fill="#d0cc98"/><path d="M2.9 0.8 V6.4 M5.1 0.8 V6.4" stroke="#b4bac4" stroke-width="0.6"/></svg>
<div class="t" style="left:425.10px;top:138.42px;font-size:6.61px;line-height:7.93px;color:#3a3a3a;transform:scaleX(0.9);transform-origin:0 50%;">АвансовыйОтчетПрисоединенныеФайлы</div>
<svg style="left:403.00px;top:148.00px;" width="7" height="7" viewBox="0 0 7 7"><circle cx="3.5" cy="3.5" r="2.7" fill="#fff" stroke="#c0c0c0" stroke-width="0.7"/><path d="M2 3.5 H5" stroke="#8a8a8a" stroke-width="0.65"/><path d="M3.5 2 V5" stroke="#8a8a8a" stroke-width="0.65"/></svg>
<svg style="left:413.40px;top:148.65px;" width="8" height="7" viewBox="0 0 8 7"><rect x="0.4" y="0.4" width="7.2" height="6.2" fill="#f4f4f2" stroke="#b4bac4" stroke-width="0.7"/><rect x="0.8" y="0.8" width="6.4" height="1.5" fill="#d0cc98"/><path d="M2.9 0.8 V6.4 M5.1 0.8 V6.4" stroke="#b4bac4" stroke-width="0.6"/></svg>
<div class="t" style="left:425.10px;top:148.53px;font-size:6.61px;line-height:7.93px;color:#3a3a3a;transform:scaleX(0.9);transform-origin:0 50%;">АктОбОказанииПроизводственныхУслугПрисоединенныеФайлы</div>
<svg style="left:403.00px;top:159.00px;" width="7" height="7" viewBox="0 0 7 7"><circle cx="3.5" cy="3.5" r="2.7" fill="#fff" stroke="#c0c0c0" stroke-width="0.7"/><path d="M2 3.5 H5" stroke="#8a8a8a" stroke-width="0.65"/><path d="M3.5 2 V5" stroke="#8a8a8a" stroke-width="0.65"/></svg>
<svg style="left:413.40px;top:158.76px;" width="8" height="7" viewBox="0 0 8 7"><rect x="0.4" y="0.4" width="7.2" height="6.2" fill="#f4f4f2" stroke="#b4bac4" stroke-width="0.7"/><rect x="0.8" y="0.8" width="6.4" height="1.5" fill="#d0cc98"/><path d="M2.9 0.8 V6.4 M5.1 0.8 V6.4" stroke="#b4bac4" stroke-width="0.6"/></svg>
<div class="t" style="left:425.10px;top:158.64px;font-size:6.61px;line-height:7.93px;color:#3a3a3a;transform:scaleX(0.9);transform-origin:0 50%;">АктСверкиВзаиморасчетовПрисоединенныеФайлы</div>
<svg style="left:403.00px;top:169.00px;" width="7" height="7" viewBox="0 0 7 7"><circle cx="3.5" cy="3.5" r="2.7" fill="#fff" stroke="#c0c0c0" stroke-width="0.7"/><path d="M2 3.5 H5" stroke="#8a8a8a" stroke-width="0.65"/><path d="M3.5 2 V5" stroke="#8a8a8a" stroke-width="0.65"/></svg>
<svg style="left:413.40px;top:168.87px;" width="8" height="7" viewBox="0 0 8 7"><rect x="0.4" y="0.4" width="7.2" height="6.2" fill="#f4f4f2" stroke="#b4bac4" stroke-width="0.7"/><rect x="0.8" y="0.8" width="6.4" height="1.5" fill="#d0cc98"/><path d="M2.9 0.8 V6.4 M5.1 0.8 V6.4" stroke="#b4bac4" stroke-width="0.6"/></svg>
<div class="t" style="left:425.10px;top:168.75px;font-size:6.61px;line-height:7.93px;color:#3a3a3a;transform:scaleX(0.9);transform-origin:0 50%;">Банки</div>
<svg style="left:403.00px;top:179.00px;" width="7" height="7" viewBox="0 0 7 7"><circle cx="3.5" cy="3.5" r="2.7" fill="#fff" stroke="#c0c0c0" stroke-width="0.7"/><path d="M2 3.5 H5" stroke="#8a8a8a" stroke-width="0.65"/><path d="M3.5 2 V5" stroke="#8a8a8a" stroke-width="0.65"/></svg>
<svg style="left:413.40px;top:178.98px;" width="8" height="7" viewBox="0 0 8 7"><rect x="0.4" y="0.4" width="7.2" height="6.2" fill="#f4f4f2" stroke="#b4bac4" stroke-width="0.7"/><rect x="0.8" y="0.8" width="6.4" height="1.5" fill="#d0cc98"/><path d="M2.9 0.8 V6.4 M5.1 0.8 V6.4" stroke="#b4bac4" stroke-width="0.6"/></svg>
<div style="left:423.00px;top:177.38px;width:51.00px;height:9.80px;background:#6f94cc"></div>
<div class="t" style="left:425.10px;top:178.86px;font-size:6.61px;line-height:7.93px;color:#e8eef8;transform:scaleX(0.9);transform-origin:0 50%;">БанковскиеСчета</div>
<svg style="left:403.00px;top:189.00px;" width="7" height="7" viewBox="0 0 7 7"><circle cx="3.5" cy="3.5" r="2.7" fill="#fff" stroke="#c0c0c0" stroke-width="0.7"/><path d="M2 3.5 H5" stroke="#8a8a8a" stroke-width="0.65"/><path d="M3.5 2 V5" stroke="#8a8a8a" stroke-width="0.65"/></svg>
<svg style="left:413.40px;top:189.09px;" width="8" height="7" viewBox="0 0 8 7"><rect x="0.4" y="0.4" width="7.2" height="6.2" fill="#f4f4f2" stroke="#b4bac4" stroke-width="0.7"/><rect x="0.8" y="0.8" width="6.4" height="1.5" fill="#d0cc98"/><path d="M2.9 0.8 V6.4 M5.1 0.8 V6.4" stroke="#b4bac4" stroke-width="0.6"/></svg>
<div class="t" style="left:425.10px;top:188.97px;font-size:6.61px;line-height:7.93px;color:#3a3a3a;transform:scaleX(0.9);transform-origin:0 50%;">БланкиСтрогойОтчетности</div>
<svg style="left:403.00px;top:199.00px;" width="7" height="7" viewBox="0 0 7 7"><circle cx="3.5" cy="3.5" r="2.7" fill="#fff" stroke="#c0c0c0" stroke-width="0.7"/><path d="M2 3.5 H5" stroke="#8a8a8a" stroke-width="0.65"/><path d="M3.5 2 V5" stroke="#8a8a8a" stroke-width="0.65"/></svg>
<svg style="left:413.40px;top:199.20px;" width="8" height="7" viewBox="0 0 8 7"><rect x="0.4" y="0.4" width="7.2" height="6.2" fill="#f4f4f2" stroke="#b4bac4" stroke-width="0.7"/><rect x="0.8" y="0.8" width="6.4" height="1.5" fill="#d0cc98"/><path d="M2.9 0.8 V6.4 M5.1 0.8 V6.4" stroke="#b4bac4" stroke-width="0.6"/></svg>
<div class="t" style="left:425.10px;top:199.08px;font-size:6.61px;line-height:7.93px;color:#3a3a3a;transform:scaleX(0.9);transform-origin:0 50%;">Валюты</div>
<svg style="left:403.00px;top:209.00px;" width="7" height="7" viewBox="0 0 7 7"><circle cx="3.5" cy="3.5" r="2.7" fill="#fff" stroke="#c0c0c0" stroke-width="0.7"/><path d="M2 3.5 H5" stroke="#8a8a8a" stroke-width="0.65"/><path d="M3.5 2 V5" stroke="#8a8a8a" stroke-width="0.65"/></svg>
<svg style="left:413.40px;top:209.31px;" width="8" height="7" viewBox="0 0 8 7"><rect x="0.4" y="0.4" width="7.2" height="6.2" fill="#f4f4f2" stroke="#b4bac4" stroke-width="0.7"/><rect x="0.8" y="0.8" width="6.4" height="1.5" fill="#d0cc98"/><path d="M2.9 0.8 V6.4 M5.1 0.8 V6.4" stroke="#b4bac4" stroke-width="0.6"/></svg>
<div class="t" style="left:425.10px;top:209.19px;font-size:6.61px;line-height:7.93px;color:#3a3a3a;transform:scaleX(0.9);transform-origin:0 50%;">ВариантыОтчетов</div>
<svg style="left:403.00px;top:219.00px;" width="7" height="7" viewBox="0 0 7 7"><circle cx="3.5" cy="3.5" r="2.7" fill="#fff" stroke="#c0c0c0" stroke-width="0.7"/><path d="M2 3.5 H5" stroke="#8a8a8a" stroke-width="0.65"/><path d="M3.5 2 V5" stroke="#8a8a8a" stroke-width="0.65"/></svg>
<svg style="left:413.40px;top:219.42px;" width="8" height="7" viewBox="0 0 8 7"><rect x="0.4" y="0.4" width="7.2" height="6.2" fill="#f4f4f2" stroke="#b4bac4" stroke-width="0.7"/><rect x="0.8" y="0.8" width="6.4" height="1.5" fill="#d0cc98"/><path d="M2.9 0.8 V6.4 M5.1 0.8 V6.4" stroke="#b4bac4" stroke-width="0.6"/></svg>
<div class="t" style="left:425.10px;top:219.30px;font-size:6.61px;line-height:7.93px;color:#3a3a3a;transform:scaleX(0.9);transform-origin:0 50%;">ВедомостьНаВыплатуЗарплатыВБанкПрисоединенныеФайлы</div>
<svg style="left:403.00px;top:229.00px;" width="7" height="7" viewBox="0 0 7 7"><circle cx="3.5" cy="3.5" r="2.7" fill="#fff" stroke="#c0c0c0" stroke-width="0.7"/><path d="M2 3.5 H5" stroke="#8a8a8a" stroke-width="0.65"/><path d="M3.5 2 V5" stroke="#8a8a8a" stroke-width="0.65"/></svg>
<svg style="left:413.40px;top:229.53px;" width="8" height="7" viewBox="0 0 8 7"><rect x="0.4" y="0.4" width="7.2" height="6.2" fill="#f4f4f2" stroke="#b4bac4" stroke-width="0.7"/><rect x="0.8" y="0.8" width="6.4" height="1.5" fill="#d0cc98"/><path d="M2.9 0.8 V6.4 M5.1 0.8 V6.4" stroke="#b4bac4" stroke-width="0.6"/></svg>
<div class="t" style="left:425.10px;top:229.41px;font-size:6.61px;line-height:7.93px;color:#3a3a3a;transform:scaleX(0.9);transform-origin:0 50%;">ВедомостьНаВыплатуЗарплатыВКассуПрисоединенныеФайлы</div>
<svg style="left:403.00px;top:239.00px;" width="7" height="7" viewBox="0 0 7 7"><circle cx="3.5" cy="3.5" r="2.7" fill="#fff" stroke="#c0c0c0" stroke-width="0.7"/><path d="M2 3.5 H5" stroke="#8a8a8a" stroke-width="0.65"/><path d="M3.5 2 V5" stroke="#8a8a8a" stroke-width="0.65"/></svg>
<svg style="left:413.40px;top:239.64px;" width="8" height="7" viewBox="0 0 8 7"><rect x="0.4" y="0.4" width="7.2" height="6.2" fill="#f4f4f2" stroke="#b4bac4" stroke-width="0.7"/><rect x="0.8" y="0.8" width="6.4" height="1.5" fill="#d0cc98"/><path d="M2.9 0.8 V6.4 M5.1 0.8 V6.4" stroke="#b4bac4" stroke-width="0.6"/></svg>
<div class="t" style="left:425.10px;top:239.52px;font-size:6.61px;line-height:7.93px;color:#3a3a3a;transform:scaleX(0.9);transform-origin:0 50%;">ВедомостьУплатыАДВ_11ПрисоединенныеФайлы</div>
<svg style="left:403.00px;top:250.00px;" width="7" height="7" viewBox="0 0 7 7"><circle cx="3.5" cy="3.5" r="2.7" fill="#fff" stroke="#c0c0c0" stroke-width="0.7"/><path d="M2 3.5 H5" stroke="#8a8a8a" stroke-width="0.65"/><path d="M3.5 2 V5" stroke="#8a8a8a" stroke-width="0.65"/></svg>
<svg style="left:413.40px;top:249.75px;" width="8" height="7" viewBox="0 0 8 7"><rect x="0.4" y="0.4" width="7.2" height="6.2" fill="#f4f4f2" stroke="#b4bac4" stroke-width="0.7"/><rect x="0.8" y="0.8" width="6.4" height="1.5" fill="#d0cc98"/><path d="M2.9 0.8 V6.4 M5.1 0.8 V6.4" stroke="#b4bac4" stroke-width="0.6"/></svg>
<div class="t" style="left:425.10px;top:249.63px;font-size:6.61px;line-height:7.93px;color:#3a3a3a;transform:scaleX(0.9);transform-origin:0 50%;">ВерсииРасширений</div>
<svg style="left:403.00px;top:260.00px;" width="7" height="7" viewBox="0 0 7 7"><circle cx="3.5" cy="3.5" r="2.7" fill="#fff" stroke="#c0c0c0" stroke-width="0.7"/><path d="M2 3.5 H5" stroke="#8a8a8a" stroke-width="0.65"/><path d="M3.5 2 V5" stroke="#8a8a8a" stroke-width="0.65"/></svg>
<svg style="left:413.40px;top:259.86px;" width="8" height="7" viewBox="0 0 8 7"><rect x="0.4" y="0.4" width="7.2" height="6.2" fill="#f4f4f2" stroke="#b4bac4" stroke-width="0.7"/><rect x="0.8" y="0.8" width="6.4" height="1.5" fill="#d0cc98"/><path d="M2.9 0.8 V6.4 M5.1 0.8 V6.4" stroke="#b4bac4" stroke-width="0.6"/></svg>
<div class="t" style="left:425.10px;top:259.75px;font-size:6.61px;line-height:7.93px;color:#3a3a3a;transform:scaleX(0.9);transform-origin:0 50%;">ВерсииФайлов</div>
<svg style="left:403.00px;top:270.00px;" width="7" height="7" viewBox="0 0 7 7"><circle cx="3.5" cy="3.5" r="2.7" fill="#fff" stroke="#c0c0c0" stroke-width="0.7"/><path d="M2 3.5 H5" stroke="#8a8a8a" stroke-width="0.65"/><path d="M3.5 2 V5" stroke="#8a8a8a" stroke-width="0.65"/></svg>
<svg style="left:413.40px;top:269.97px;" width="8" height="7" viewBox="0 0 8 7"><rect x="0.4" y="0.4" width="7.2" height="6.2" fill="#f4f4f2" stroke="#b4bac4" stroke-width="0.7"/><rect x="0.8" y="0.8" width="6.4" height="1.5" fill="#d0cc98"/><path d="M2.9 0.8 V6.4 M5.1 0.8 V6.4" stroke="#b4bac4" stroke-width="0.6"/></svg>
<div class="t" style="left:425.10px;top:269.86px;font-size:6.61px;line-height:7.93px;color:#3a3a3a;transform:scaleX(0.9);transform-origin:0 50%;">ВидыАлкогольнойПродукции</div>
<svg style="left:403.00px;top:280.00px;" width="7" height="7" viewBox="0 0 7 7"><circle cx="3.5" cy="3.5" r="2.7" fill="#fff" stroke="#c0c0c0" stroke-width="0.7"/><path d="M2 3.5 H5" stroke="#8a8a8a" stroke-width="0.65"/><path d="M3.5 2 V5" stroke="#8a8a8a" stroke-width="0.65"/></svg>
<svg style="left:413.40px;top:280.08px;" width="8" height="7" viewBox="0 0 8 7"><rect x="0.4" y="0.4" width="7.2" height="6.2" fill="#f4f4f2" stroke="#b4bac4" stroke-width="0.7"/><rect x="0.8" y="0.8" width="6.4" height="1.5" fill="#d0cc98"/><path d="M2.9 0.8 V6.4 M5.1 0.8 V6.4" stroke="#b4bac4" stroke-width="0.6"/></svg>
<div class="t" style="left:425.10px;top:279.97px;font-size:6.61px;line-height:7.93px;color:#3a3a3a;transform:scaleX(0.9);transform-origin:0 50%;">ВидыВзаиморасчетов</div>
<svg style="left:403.00px;top:290.00px;" width="7" height="7" viewBox="0 0 7 7"><circle cx="3.5" cy="3.5" r="2.7" fill="#fff" stroke="#c0c0c0" stroke-width="0.7"/><path d="M2 3.5 H5" stroke="#8a8a8a" stroke-width="0.65"/><path d="M3.5 2 V5" stroke="#8a8a8a" stroke-width="0.65"/></svg>
<svg style="left:413.40px;top:290.19px;" width="8" height="7" viewBox="0 0 8 7"><rect x="0.4" y="0.4" width="7.2" height="6.2" fill="#f4f4f2" stroke="#b4bac4" stroke-width="0.7"/><rect x="0.8" y="0.8" width="6.4" height="1.5" fill="#d0cc98"/><path d="M2.9 0.8 V6.4 M5.1 0.8 V6.4" stroke="#b4bac4" stroke-width="0.6"/></svg>
<div class="t" style="left:425.10px;top:290.08px;font-size:6.61px;line-height:7.93px;color:#3a3a3a;transform:scaleX(0.9);transform-origin:0 50%;">ВидыВычетовНДФЛ</div>
<svg style="left:403.00px;top:300.00px;" width="7" height="7" viewBox="0 0 7 7"><circle cx="3.5" cy="3.5" r="2.7" fill="#fff" stroke="#c0c0c0" stroke-width="0.7"/><path d="M2 3.5 H5" stroke="#8a8a8a" stroke-width="0.65"/><path d="M3.5 2 V5" stroke="#8a8a8a" stroke-width="0.65"/></svg>
<svg style="left:413.40px;top:300.30px;" width="8" height="7" viewBox="0 0 8 7"><rect x="0.4" y="0.4" width="7.2" height="6.2" fill="#f4f4f2" stroke="#b4bac4" stroke-width="0.7"/><rect x="0.8" y="0.8" width="6.4" height="1.5" fill="#d0cc98"/><path d="M2.9 0.8 V6.4 M5.1 0.8 V6.4" stroke="#b4bac4" stroke-width="0.6"/></svg>
<div class="t" style="left:425.10px;top:300.19px;font-size:6.61px;line-height:7.93px;color:#3a3a3a;transform:scaleX(0.9);transform-origin:0 50%;">ВидыДеятельностиЕНВД</div>
<svg style="left:403.00px;top:310.00px;" width="7" height="7" viewBox="0 0 7 7"><circle cx="3.5" cy="3.5" r="2.7" fill="#fff" stroke="#c0c0c0" stroke-width="0.7"/><path d="M2 3.5 H5" stroke="#8a8a8a" stroke-width="0.65"/><path d="M3.5 2 V5" stroke="#8a8a8a" stroke-width="0.65"/></svg>
<svg style="left:413.40px;top:310.41px;" width="8" height="7" viewBox="0 0 8 7"><rect x="0.4" y="0.4" width="7.2" height="6.2" fill="#f4f4f2" stroke="#b4bac4" stroke-width="0.7"/><rect x="0.8" y="0.8" width="6.4" height="1.5" fill="#d0cc98"/><path d="M2.9 0.8 V6.4 M5.1 0.8 V6.4" stroke="#b4bac4" stroke-width="0.6"/></svg>
<div class="t" style="left:425.10px;top:310.30px;font-size:6.61px;line-height:7.93px;color:#3a3a3a;transform:scaleX(0.9);transform-origin:0 50%;">ВидыДеятельностиПредпринимателей</div>
<svg style="left:403.00px;top:320.00px;" width="7" height="7" viewBox="0 0 7 7"><circle cx="3.5" cy="3.5" r="2.7" fill="#fff" stroke="#c0c0c0" stroke-width="0.7"/><path d="M2 3.5 H5" stroke="#8a8a8a" stroke-width="0.65"/><path d="M3.5 2 V5" stroke="#8a8a8a" stroke-width="0.65"/></svg>
<svg style="left:413.40px;top:320.52px;" width="8" height="7" viewBox="0 0 8 7"><rect x="0.4" y="0.4" width="7.2" height="6.2" fill="#f4f4f2" stroke="#b4bac4" stroke-width="0.7"/><rect x="0.8" y="0.8" width="6.4" height="1.5" fill="#d0cc98"/><path d="M2.9 0.8 V6.4 M5.1 0.8 V6.4" stroke="#b4bac4" stroke-width="0.6"/></svg>
<div class="t" style="left:425.10px;top:320.41px;font-size:6.61px;line-height:7.93px;color:#3a3a3a;transform:scaleX(0.9);transform-origin:0 50%;">ВидыДокументовФизическихЛиц</div>
<svg style="left:403.00px;top:330.00px;" width="7" height="7" viewBox="0 0 7 7"><circle cx="3.5" cy="3.5" r="2.7" fill="#fff" stroke="#c0c0c0" stroke-width="0.7"/><path d="M2 3.5 H5" stroke="#8a8a8a" stroke-width="0.65"/><path d="M3.5 2 V5" stroke="#8a8a8a" stroke-width="0.65"/></svg>
<svg style="left:413.40px;top:330.63px;" width="8" height="7" viewBox="0 0 8 7"><rect x="0.4" y="0.4" width="7.2" height="6.2" fill="#f4f4f2" stroke="#b4bac4" stroke-width="0.7"/><rect x="0.8" y="0.8" width="6.4" height="1.5" fill="#d0cc98"/><path d="M2.9 0.8 V6.4 M5.1 0.8 V6.4" stroke="#b4bac4" stroke-width="0.6"/></svg>
<div class="t" style="left:425.10px;top:330.51px;font-size:6.61px;line-height:7.93px;color:#3a3a3a;transform:scaleX(0.9);transform-origin:0 50%;">ВидыДоходовНДФЛ</div>
<svg style="left:403.00px;top:341.00px;" width="7" height="7" viewBox="0 0 7 7"><circle cx="3.5" cy="3.5" r="2.7" fill="#fff" stroke="#c0c0c0" stroke-width="0.7"/><path d="M2 3.5 H5" stroke="#8a8a8a" stroke-width="0.65"/><path d="M3.5 2 V5" stroke="#8a8a8a" stroke-width="0.65"/></svg>
<svg style="left:413.40px;top:340.74px;" width="8" height="7" viewBox="0 0 8 7"><rect x="0.4" y="0.4" width="7.2" height="6.2" fill="#f4f4f2" stroke="#b4bac4" stroke-width="0.7"/><rect x="0.8" y="0.8" width="6.4" height="1.5" fill="#d0cc98"/><path d="M2.9 0.8 V6.4 M5.1 0.8 V6.4" stroke="#b4bac4" stroke-width="0.6"/></svg>
<div class="t" style="left:425.10px;top:340.62px;font-size:6.61px;line-height:7.93px;color:#3a3a3a;transform:scaleX(0.9);transform-origin:0 50%;">ВидыДоходовПоСтраховымВзносам</div>
<svg style="left:403.00px;top:351.00px;" width="7" height="7" viewBox="0 0 7 7"><circle cx="3.5" cy="3.5" r="2.7" fill="#fff" stroke="#c0c0c0" stroke-width="0.7"/><path d="M2 3.5 H5" stroke="#8a8a8a" stroke-width="0.65"/><path d="M3.5 2 V5" stroke="#8a8a8a" stroke-width="0.65"/></svg>
<svg style="left:413.40px;top:350.85px;" width="8" height="7" viewBox="0 0 8 7"><rect x="0.4" y="0.4" width="7.2" height="6.2" fill="#f4f4f2" stroke="#b4bac4" stroke-width="0.7"/><rect x="0.8" y="0.8" width="6.4" height="1.5" fill="#d0cc98"/><path d="M2.9 0.8 V6.4 M5.1 0.8 V6.4" stroke="#b4bac4" stroke-width="0.6"/></svg>
<div class="t" style="left:425.10px;top:350.74px;font-size:6.61px;line-height:7.93px;color:#3a3a3a;transform:scaleX(0.9);transform-origin:0 50%;">ВидыИспользованияРабочегоВремени</div>
<svg style="left:403.00px;top:361.00px;" width="7" height="7" viewBox="0 0 7 7"><circle cx="3.5" cy="3.5" r="2.7" fill="#fff" stroke="#c0c0c0" stroke-width="0.7"/><path d="M2 3.5 H5" stroke="#8a8a8a" stroke-width="0.65"/><path d="M3.5 2 V5" stroke="#8a8a8a" stroke-width="0.65"/></svg>
<svg style="left:413.40px;top:360.96px;" width="8" height="7" viewBox="0 0 8 7"><rect x="0.4" y="0.4" width="7.2" height="6.2" fill="#f4f4f2" stroke="#b4bac4" stroke-width="0.7"/><rect x="0.8" y="0.8" width="6.4" height="1.5" fill="#d0cc98"/><path d="M2.9 0.8 V6.4 M5.1 0.8 V6.4" stroke="#b4bac4" stroke-width="0.6"/></svg>
<div class="t" style="left:425.10px;top:360.85px;font-size:6.61px;line-height:7.93px;color:#3a3a3a;transform:scaleX(0.9);transform-origin:0 50%;">ВидыКонтактнойИнформации</div>
<svg style="left:403.00px;top:371.00px;" width="7" height="7" viewBox="0 0 7 7"><circle cx="3.5" cy="3.5" r="2.7" fill="#fff" stroke="#c0c0c0" stroke-width="0.7"/><path d="M2 3.5 H5" stroke="#8a8a8a" stroke-width="0.65"/><path d="M3.5 2 V5" stroke="#8a8a8a" stroke-width="0.65"/></svg>
<svg style="left:413.40px;top:371.07px;" width="8" height="7" viewBox="0 0 8 7"><rect x="0.4" y="0.4" width="7.2" height="6.2" fill="#f4f4f2" stroke="#b4bac4" stroke-width="0.7"/><rect x="0.8" y="0.8" width="6.4" height="1.5" fill="#d0cc98"/><path d="M2.9 0.8 V6.4 M5.1 0.8 V6.4" stroke="#b4bac4" stroke-width="0.6"/></svg>
<div class="t" style="left:425.10px;top:370.96px;font-size:6.61px;line-height:7.93px;color:#3a3a3a;transform:scaleX(0.9);transform-origin:0 50%;">ВидыМехаГИСМ</div>
<svg style="left:403.00px;top:381.00px;" width="7" height="7" viewBox="0 0 7 7"><circle cx="3.5" cy="3.5" r="2.7" fill="#fff" stroke="#c0c0c0" stroke-width="0.7"/><path d="M2 3.5 H5" stroke="#8a8a8a" stroke-width="0.65"/><path d="M3.5 2 V5" stroke="#8a8a8a" stroke-width="0.65"/></svg>
<svg style="left:413.40px;top:381.18px;" width="8" height="7" viewBox="0 0 8 7"><rect x="0.4" y="0.4" width="7.2" height="6.2" fill="#f4f4f2" stroke="#b4bac4" stroke-width="0.7"/><rect x="0.8" y="0.8" width="6.4" height="1.5" fill="#d0cc98"/><path d="M2.9 0.8 V6.4 M5.1 0.8 V6.4" stroke="#b4bac4" stroke-width="0.6"/></svg>
<div class="t" style="left:425.10px;top:381.07px;font-size:6.61px;line-height:7.93px;color:#3a3a3a;transform:scaleX(0.9);transform-origin:0 50%;">ВидыНалоговИПлатежейВБюджет</div>
<svg style="left:403.00px;top:391.00px;" width="7" height="7" viewBox="0 0 7 7"><circle cx="3.5" cy="3.5" r="2.7" fill="#fff" stroke="#c0c0c0" stroke-width="0.7"/><path d="M2 3.5 H5" stroke="#8a8a8a" stroke-width="0.65"/><path d="M3.5 2 V5" stroke="#8a8a8a" stroke-width="0.65"/></svg>
<svg style="left:413.40px;top:391.29px;" width="8" height="7" viewBox="0 0 8 7"><rect x="0.4" y="0.4" width="7.2" height="6.2" fill="#f4f4f2" stroke="#b4bac4" stroke-width="0.7"/><rect x="0.8" y="0.8" width="6.4" height="1.5" fill="#d0cc98"/><path d="M2.9 0.8 V6.4 M5.1 0.8 V6.4" stroke="#b4bac4" stroke-width="0.6"/></svg>
<div class="t" style="left:425.10px;top:391.18px;font-size:6.61px;line-height:7.93px;color:#3a3a3a;transform:scaleX(0.9);transform-origin:0 50%;">ВидыНалоговыхОрганов</div>
<svg style="left:403.00px;top:401.00px;" width="7" height="7" viewBox="0 0 7 7"><circle cx="3.5" cy="3.5" r="2.7" fill="#fff" stroke="#c0c0c0" stroke-width="0.7"/><path d="M2 3.5 H5" stroke="#8a8a8a" stroke-width="0.65"/><path d="M3.5 2 V5" stroke="#8a8a8a" stroke-width="0.65"/></svg>
<svg style="left:413.40px;top:401.40px;" width="8" height="7" viewBox="0 0 8 7"><rect x="0.4" y="0.4" width="7.2" height="6.2" fill="#f4f4f2" stroke="#b4bac4" stroke-width="0.7"/><rect x="0.8" y="0.8" width="6.4" height="1.5" fill="#d0cc98"/><path d="M2.9 0.8 V6.4 M5.1 0.8 V6.4" stroke="#b4bac4" stroke-width="0.6"/></svg>
<div class="t" style="left:425.10px;top:401.28px;font-size:6.61px;line-height:7.93px;color:#3a3a3a;transform:scaleX(0.9);transform-origin:0 50%;">ВидыНоменклатуры</div>
<svg style="left:403.00px;top:411.00px;" width="7" height="7" viewBox="0 0 7 7"><circle cx="3.5" cy="3.5" r="2.7" fill="#fff" stroke="#c0c0c0" stroke-width="0.7"/><path d="M2 3.5 H5" stroke="#8a8a8a" stroke-width="0.65"/><path d="M3.5 2 V5" stroke="#8a8a8a" stroke-width="0.65"/></svg>
<svg style="left:413.40px;top:411.51px;" width="8" height="7" viewBox="0 0 8 7"><rect x="0.4" y="0.4" width="7.2" height="6.2" fill="#f4f4f2" stroke="#b4bac4" stroke-width="0.7"/><rect x="0.8" y="0.8" width="6.4" height="1.5" fill="#d0cc98"/><path d="M2.9 0.8 V6.4 M5.1 0.8 V6.4" stroke="#b4bac4" stroke-width="0.6"/></svg>
<div class="t" style="left:425.10px;top:411.39px;font-size:6.61px;line-height:7.93px;color:#3a3a3a;transform:scaleX(0.9);transform-origin:0 50%;">ВидыОбщественноПолезнойДеятельностиСЗВК</div>
<svg style="left:403.00px;top:421.00px;" width="7" height="7" viewBox="0 0 7 7"><circle cx="3.5" cy="3.5" r="2.7" fill="#fff" stroke="#c0c0c0" stroke-width="0.7"/><path d="M2 3.5 H5" stroke="#8a8a8a" stroke-width="0.65"/><path d="M3.5 2 V5" stroke="#8a8a8a" stroke-width="0.65"/></svg>
<svg style="left:413.40px;top:421.62px;" width="8" height="7" viewBox="0 0 8 7"><rect x="0.4" y="0.4" width="7.2" height="6.2" fill="#f4f4f2" stroke="#b4bac4" stroke-width="0.7"/><rect x="0.8" y="0.8" width="6.4" height="1.5" fill="#d0cc98"/><path d="M2.9 0.8 V6.4 M5.1 0.8 V6.4" stroke="#b4bac4" stroke-width="0.6"/></svg>
<div class="t" style="left:425.10px;top:421.50px;font-size:6.61px;line-height:7.93px;color:#3a3a3a;transform:scaleX(0.9);transform-origin:0 50%;">ВидыОплатОрганизаций</div>
<svg style="left:403.00px;top:432.00px;" width="7" height="7" viewBox="0 0 7 7"><circle cx="3.5" cy="3.5" r="2.7" fill="#fff" stroke="#c0c0c0" stroke-width="0.7"/><path d="M2 3.5 H5" stroke="#8a8a8a" stroke-width="0.65"/><path d="M3.5 2 V5" stroke="#8a8a8a" stroke-width="0.65"/></svg>
<svg style="left:413.40px;top:431.73px;" width="8" height="7" viewBox="0 0 8 7"><rect x="0.4" y="0.4" width="7.2" height="6.2" fill="#f4f4f2" stroke="#b4bac4" stroke-width="0.7"/><rect x="0.8" y="0.8" width="6.4" height="1.5" fill="#d0cc98"/><path d="M2.9 0.8 V6.4 M5.1 0.8 V6.4" stroke="#b4bac4" stroke-width="0.6"/></svg>
<div class="t" style="left:425.10px;top:431.62px;font-size:6.61px;line-height:7.93px;color:#3a3a3a;transform:scaleX(0.9);transform-origin:0 50%;">ВидыОтправляемыхДокументов</div>
<svg style="left:403.00px;top:442.00px;" width="7" height="7" viewBox="0 0 7 7"><circle cx="3.5" cy="3.5" r="2.7" fill="#fff" stroke="#c0c0c0" stroke-width="0.7"/><path d="M2 3.5 H5" stroke="#8a8a8a" stroke-width="0.65"/><path d="M3.5 2 V5" stroke="#8a8a8a" stroke-width="0.65"/></svg>
<svg style="left:413.40px;top:441.84px;" width="8" height="7" viewBox="0 0 8 7"><rect x="0.4" y="0.4" width="7.2" height="6.2" fill="#f4f4f2" stroke="#b4bac4" stroke-width="0.7"/><rect x="0.8" y="0.8" width="6.4" height="1.5" fill="#d0cc98"/><path d="M2.9 0.8 V6.4 M5.1 0.8 V6.4" stroke="#b4bac4" stroke-width="0.6"/></svg>
<div class="t" style="left:425.10px;top:441.73px;font-size:6.61px;line-height:7.93px;color:#3a3a3a;transform:scaleX(0.9);transform-origin:0 50%;">ВидыРегистровУчета</div>
<svg style="left:403.00px;top:452.00px;" width="7" height="7" viewBox="0 0 7 7"><circle cx="3.5" cy="3.5" r="2.7" fill="#fff" stroke="#c0c0c0" stroke-width="0.7"/><path d="M2 3.5 H5" stroke="#8a8a8a" stroke-width="0.65"/><path d="M3.5 2 V5" stroke="#8a8a8a" stroke-width="0.65"/></svg>
<svg style="left:413.40px;top:451.95px;" width="8" height="7" viewBox="0 0 8 7"><rect x="0.4" y="0.4" width="7.2" height="6.2" fill="#f4f4f2" stroke="#b4bac4" stroke-width="0.7"/><rect x="0.8" y="0.8" width="6.4" height="1.5" fill="#d0cc98"/><path d="M2.9 0.8 V6.4 M5.1 0.8 V6.4" stroke="#b4bac4" stroke-width="0.6"/></svg>
<div class="t" style="left:425.10px;top:451.84px;font-size:6.61px;line-height:7.93px;color:#3a3a3a;transform:scaleX(0.9);transform-origin:0 50%;">ВидыТарифовСтраховыхВзносов</div>
<svg style="left:403.00px;top:462.00px;" width="7" height="7" viewBox="0 0 7 7"><circle cx="3.5" cy="3.5" r="2.7" fill="#fff" stroke="#c0c0c0" stroke-width="0.7"/><path d="M2 3.5 H5" stroke="#8a8a8a" stroke-width="0.65"/><path d="M3.5 2 V5" stroke="#8a8a8a" stroke-width="0.65"/></svg>
<svg style="left:413.40px;top:462.06px;" width="8" height="7" viewBox="0 0 8 7"><rect x="0.4" y="0.4" width="7.2" height="6.2" fill="#f4f4f2" stroke="#b4bac4" stroke-width="0.7"/><rect x="0.8" y="0.8" width="6.4" height="1.5" fill="#d0cc98"/><path d="M2.9 0.8 V6.4 M5.1 0.8 V6.4" stroke="#b4bac4" stroke-width="0.6"/></svg>
<div class="t" style="left:425.10px;top:461.95px;font-size:6.61px;line-height:7.93px;color:#3a3a3a;transform:scaleX(0.9);transform-origin:0 50%;">ВнешниеПользователи</div>
<div class="t" style="left:397.00px;top:471.55px;font-size:6.50px;line-height:7.80px;color:#444;transform:scaleX(0.9);transform-origin:0 50%;">Описание:</div>
<div class="t" style="left:428.70px;top:471.55px;font-size:6.50px;line-height:7.80px;color:#3a3a3a;transform:scaleX(0.9);transform-origin:0 50%;">Право на чтение</div>
<div class="t" style="left:428.70px;top:478.45px;font-size:6.50px;line-height:7.80px;color:#3a3a3a;transform:scaleX(0.9);transform-origin:0 50%;">(Чтение)</div>
<div class="t" style="left:638.00px;top:85.85px;font-size:6.50px;line-height:7.80px;color:#555;transform:scaleX(0.9);transform-origin:0 50%;">Права:</div>
<svg style="left:992.50px;top:85.50px;" width="8" height="7" viewBox="0 0 8 7"><path d="M1 2 L3 0.5 H7 V4.5 L5 6.5 H1 Z" fill="#b8c0b8"/><rect x="1" y="2" width="4" height="4.5" fill="#98a898"/></svg>
<svg style="left:1004.50px;top:85.50px;" width="8" height="7" viewBox="0 0 8 7"><path d="M1 2 L3 0.5 H7 V4.5 L5 6.5 H1 Z" fill="#c8ccd0"/><rect x="1" y="2" width="4" height="4.5" fill="#b0b8c0"/></svg>
<div style="left:636.30px;top:95.60px;width:378.40px;height:175.60px;background:#fff;border:0.7px solid #d6d1bc;box-sizing:border-box"></div>
<div style="left:636.80px;top:95.90px;width:377.40px;height:10.20px;background:#4e65c4"></div>
<div style="left:636.80px;top:106.10px;width:377.40px;height:20.20px;background:#d9d9d9"></div>
<svg style="left:640.20px;top:99.40px;" width="5" height="5" viewBox="0 0 5 5"><path d="M0.5 2.5 L1.7 3.8 L4.2 1" fill="none" stroke="#10184a" stroke-width="1.05"/></svg>
<div class="t" style="left:647.10px;top:98.05px;font-size:6.50px;line-height:7.80px;color:#e8ecff;transform:scaleX(0.9);transform-origin:0 50%;">Чтение</div>
<svg style="left:640.20px;top:109.53px;" width="5" height="5" viewBox="0 0 5 5"><path d="M0.5 2.5 L1.7 3.8 L4.2 1" fill="none" stroke="#3a3a3a" stroke-width="1.05"/></svg>
<div class="t" style="left:647.10px;top:108.18px;font-size:6.50px;line-height:7.80px;color:#3a3a3a;transform:scaleX(0.9);transform-origin:0 50%;">Добавление</div>
<svg style="left:640.20px;top:119.66px;" width="5" height="5" viewBox="0 0 5 5"><path d="M0.5 2.5 L1.7 3.8 L4.2 1" fill="none" stroke="#3a3a3a" stroke-width="1.05"/></svg>
<div class="t" style="left:647.10px;top:118.31px;font-size:6.50px;line-height:7.80px;color:#3a3a3a;transform:scaleX(0.9);transform-origin:0 50%;">Изменение</div>
<svg style="left:640.20px;top:129.79px;" width="5" height="5" viewBox="0 0 5 5"><path d="M0.5 2.5 L1.7 3.8 L4.2 1" fill="none" stroke="#3a3a3a" stroke-width="1.05"/></svg>
<div class="t" style="left:647.10px;top:128.44px;font-size:6.50px;line-height:7.80px;color:#3a3a3a;transform:scaleX(0.9);transform-origin:0 50%;">Удаление</div>
<svg style="left:640.20px;top:139.92px;" width="5" height="5" viewBox="0 0 5 5"><path d="M0.5 2.5 L1.7 3.8 L4.2 1" fill="none" stroke="#3a3a3a" stroke-width="1.05"/></svg>
<div class="t" style="left:647.10px;top:138.57px;font-size:6.50px;line-height:7.80px;color:#3a3a3a;transform:scaleX(0.9);transform-origin:0 50%;">Просмотр</div>
<svg style="left:640.20px;top:150.05px;" width="5" height="5" viewBox="0 0 5 5"><path d="M0.5 2.5 L1.7 3.8 L4.2 1" fill="none" stroke="#3a3a3a" stroke-width="1.05"/></svg>
<div class="t" style="left:647.10px;top:148.70px;font-size:6.50px;line-height:7.80px;color:#3a3a3a;transform:scaleX(0.9);transform-origin:0 50%;">Интерактивное добавление</div>
<svg style="left:640.20px;top:160.18px;" width="5" height="5" viewBox="0 0 5 5"><path d="M0.5 2.5 L1.7 3.8 L4.2 1" fill="none" stroke="#3a3a3a" stroke-width="1.05"/></svg>
<div class="t" style="left:647.10px;top:158.83px;font-size:6.50px;line-height:7.80px;color:#3a3a3a;transform:scaleX(0.9);transform-origin:0 50%;">Редактирование</div>
<div class="t" style="left:647.10px;top:168.96px;font-size:6.50px;line-height:7.80px;color:#3a3a3a;transform:scaleX(0.9);transform-origin:0 50%;">Интерактивное удаление</div>
<svg style="left:640.20px;top:180.44px;" width="5" height="5" viewBox="0 0 5 5"><path d="M0.5 2.5 L1.7 3.8 L4.2 1" fill="none" stroke="#3a3a3a" stroke-width="1.05"/></svg>
<div class="t" style="left:647.10px;top:179.09px;font-size:6.50px;line-height:7.80px;color:#3a3a3a;transform:scaleX(0.9);transform-origin:0 50%;">Интерактивная пометка на удаление</div>
<svg style="left:640.20px;top:190.57px;" width="5" height="5" viewBox="0 0 5 5"><path d="M0.5 2.5 L1.7 3.8 L4.2 1" fill="none" stroke="#3a3a3a" stroke-width="1.05"/></svg>
<div class="t" style="left:647.10px;top:189.22px;font-size:6.50px;line-height:7.80px;color:#3a3a3a;transform:scaleX(0.9);transform-origin:0 50%;">Интерактивное снятие пометки удаления</div>
<svg style="left:640.20px;top:200.70px;" width="5" height="5" viewBox="0 0 5 5"><path d="M0.5 2.5 L1.7 3.8 L4.2 1" fill="none" stroke="#3a3a3a" stroke-width="1.05"/></svg>
<div class="t" style="left:647.10px;top:199.35px;font-size:6.50px;line-height:7.80px;color:#3a3a3a;transform:scaleX(0.9);transform-origin:0 50%;">Интерактивное удаление помеченных</div>
<svg style="left:640.20px;top:210.83px;" width="5" height="5" viewBox="0 0 5 5"><path d="M0.5 2.5 L1.7 3.8 L4.2 1" fill="none" stroke="#3a3a3a" stroke-width="1.05"/></svg>
<div class="t" style="left:647.10px;top:209.48px;font-size:6.50px;line-height:7.80px;color:#3a3a3a;transform:scaleX(0.9);transform-origin:0 50%;">Ввод по строке</div>
<div class="t" style="left:647.10px;top:219.61px;font-size:6.50px;line-height:7.80px;color:#3a3a3a;transform:scaleX(0.9);transform-origin:0 50%;">Интерактивное удаление предопределенных</div>
<div class="t" style="left:647.10px;top:229.74px;font-size:6.50px;line-height:7.80px;color:#3a3a3a;transform:scaleX(0.9);transform-origin:0 50%;">Интерактивная пометка на удаление предопределенных</div>
<div class="t" style="left:647.10px;top:239.87px;font-size:6.50px;line-height:7.80px;color:#3a3a3a;transform:scaleX(0.9);transform-origin:0 50%;">Интерактивное снятие пометки удаления предопределенных</div>
<div class="t" style="left:647.10px;top:250.00px;font-size:6.50px;line-height:7.80px;color:#3a3a3a;transform:scaleX(0.9);transform-origin:0 50%;">Интерактивное удаление помеченных предопределенных</div>
<svg style="left:1006.20px;top:98.10px;" width="6.4" height="6.4" viewBox="0 0 6.4 6.4"><rect x="0.2" y="0.2" width="6" height="6" fill="#6a6c80"/><path d="M1.5 1.5 H2.6 V2.6 H1.5 Z M3.8 1.5 H4.9 V2.6 H3.8 Z M1.5 3.8 H2.6 V4.9 H1.5 Z M3.8 3.8 H4.9 V4.9 H3.8 Z" fill="#dfe0ea"/></svg>
<svg style="left:1006.20px;top:108.23px;" width="6.4" height="6.4" viewBox="0 0 6.4 6.4"><rect x="0.3" y="0.3" width="5.8" height="5.8" rx="0.6" fill="#eed8a0" stroke="#dcc088" stroke-width="0.5"/><path d="M3.2 0.6 V5.8 M0.6 3.2 H5.8" stroke="#fbf2d8" stroke-width="0.7"/></svg>
<svg style="left:1006.20px;top:118.36px;" width="6.4" height="6.4" viewBox="0 0 6.4 6.4"><rect x="0.3" y="0.3" width="5.8" height="5.8" rx="0.6" fill="#eed8a0" stroke="#dcc088" stroke-width="0.5"/><path d="M3.2 0.6 V5.8 M0.6 3.2 H5.8" stroke="#fbf2d8" stroke-width="0.7"/></svg>
<div style="left:636.80px;top:95.90px;width:377.40px;height:10.20px;border:0.7px dotted #343c70;box-sizing:border-box"></div>
<div class="t" style="left:636.30px;top:280.75px;font-size:6.50px;line-height:7.80px;color:#b4ae94;transform:scaleX(0.9);transform-origin:0 50%;">Ограничения доступа к данным:</div>
<svg style="left:963.80px;top:277.60px;" width="9" height="9" viewBox="0 0 9 9"><circle cx="4.5" cy="4.5" r="4.3" fill="#a4b6a4"/><circle cx="4.5" cy="4.5" r="3.3" fill="#b4c4b4"/><path d="M4.5 2.6 V6.4 M2.6 4.5 H6.4" stroke="#d8e2d8" stroke-width="0.8"/></svg>
<svg style="left:976.50px;top:278.80px;" width="8" height="7" viewBox="0 0 8 7"><path d="M1.2 5.8 L6.4 1.4" stroke="#a8b2a8" stroke-width="2"/></svg>
<svg style="left:989.00px;top:279.20px;" width="7" height="7" viewBox="0 0 7 7"><path d="M1 1 L6 6 M6 1 L1 6" stroke="#b8b8b0" stroke-width="1.25"/></svg>
<div style="left:1000.20px;top:279.00px;width:0.60px;height:7.50px;background:#e4e0cc"></div>
<svg style="left:1003.80px;top:277.80px;" width="8" height="9" viewBox="0 0 8 9"><rect x="0.5" y="1" width="6.6" height="7.2" fill="#c8ccc4"/><path d="M1 0.6 L4 2.6 L7 0.8" fill="none" stroke="#9aa49a" stroke-width="0.9"/><path d="M1.5 4.5 H6 M1.5 6 H6" stroke="#e4e6e2" stroke-width="0.5"/></svg>
<div style="left:636.30px;top:289.00px;width:377.70px;height:180.40px;background:#fff;border:0.7px solid #cfcab4;box-sizing:border-box"></div>
<div style="left:637.00px;top:289.70px;width:376.30px;height:11.00px;background:linear-gradient(#faf6e6,#efe7cb);border-bottom:0.6px solid #ddd6bc;box-sizing:border-box"></div>
<div style="left:825.10px;top:289.70px;width:0.60px;height:48.50px;background:#dcd8c8"></div>
<div class="t" style="left:638.80px;top:291.15px;font-size:6.50px;line-height:7.80px;color:#3a3a3a;transform:scaleX(0.9);transform-origin:0 50%;">Поля</div>
<div class="t" style="left:827.70px;top:291.15px;font-size:6.50px;line-height:7.80px;color:#555;transform:scaleX(0.9);transform-origin:0 50%;">Ограничение доступа</div>
<div style="left:637.00px;top:337.90px;width:376.30px;height:0.60px;background:#e0dcd0"></div>
<div class="t" style="left:638.80px;top:303.15px;font-size:6.50px;line-height:7.80px;color:#3a3a3a;transform:scaleX(0.9);transform-origin:0 50%;">&lt;Прочие поля&gt;</div>
<div class="t" style="left:827.90px;top:302.95px;font-size:6.50px;line-height:7.80px;color:#3a3a3a;transform:scaleX(0.9);transform-origin:0 50%;">#ПоЗначениямИНаборамРасширенный(&quot;Справочник.Банковские...</div>
<div class="t" style="left:830.00px;top:308.35px;font-size:5.00px;line-height:6.00px;color:#888;transform:scaleX(0.9);transform-origin:0 50%;">&quot;&quot;</div>
<div class="t" style="left:834.50px;top:312.35px;font-size:5.00px;line-height:6.00px;color:#888;transform:scaleX(0.9);transform-origin:0 50%;">,</div>
<div class="t" style="left:828.00px;top:315.35px;font-size:5.00px;line-height:6.00px;color:#888;transform:scaleX(0.9);transform-origin:0 50%;">&quot;&quot;</div>
<div class="t" style="left:833.50px;top:319.15px;font-size:5.00px;line-height:6.00px;color:#888;transform:scaleX(0.9);transform-origin:0 50%;">,</div>
<div class="t" style="left:827.50px;top:322.95px;font-size:6.50px;line-height:7.80px;color:#3a3a3a;transform:scaleX(0.9);transform-origin:0 50%;">&quot;ЛЕВОЕ СОЕДИНЕНИЕ Справочник.Организации КАК</div>
<div class="t" style="left:827.50px;top:329.95px;font-size:6.50px;line-height:7.80px;color:#3a3a3a;transform:scaleX(0.9);transform-origin:0 50%;">ОбособленныеПодразделения...</div>
<div style="left:386.90px;top:496.20px;width:5.80px;height:5.80px;background:#fbfaf2;border:0.6px solid #dcd8c4;box-sizing:border-box"></div>
<div class="t" style="left:394.40px;top:494.95px;font-size:6.50px;line-height:7.80px;color:#c4c0aa;transform:scaleX(0.9);transform-origin:0 50%;">Устанавливать права для новых объектов</div>
<div style="left:386.90px;top:507.00px;width:5.80px;height:5.80px;background:#fbfaf2;border:0.6px solid #dcd8c4;box-sizing:border-box"></div>
<svg style="left:387.40px;top:507.40px;" width="5" height="5" viewBox="0 0 5 5"><path d="M0.8 2.6 L2 3.8 L4.2 1" fill="none" stroke="#c0c0b0" stroke-width="0.7"/></svg>
<div class="t" style="left:394.40px;top:505.75px;font-size:6.50px;line-height:7.80px;color:#c4c0aa;transform:scaleX(0.9);transform-origin:0 50%;">Устанавливать права для реквизитов и табличных частей по умолчанию</div>
<div style="left:386.90px;top:517.80px;width:5.80px;height:5.80px;background:#fbfaf2;border:0.6px solid #dcd8c4;box-sizing:border-box"></div>
<div class="t" style="left:394.40px;top:516.55px;font-size:6.50px;line-height:7.80px;color:#c4c0aa;transform:scaleX(0.9);transform-origin:0 50%;">Независимые права подчиненных объектов</div>
<div style="left:0.00px;top:529.00px;width:1024.00px;height:14.00px;background:linear-gradient(#f2efdf,#efecd9)"></div>
<div style="left:1.00px;top:531.50px;width:91.00px;height:10.00px;background:#c3d4ea;border:0.5px solid #aec2da;box-sizing:border-box"></div>
<svg style="left:3.50px;top:532.10px;" width="5" height="8" viewBox="0 0 5 8"><path d="M0.3 0.9 Q2.5 -0.5 4.7 0.9 L4.3 3.3 Q2.5 4.3 0.7 3.3 Z" fill="#b09450"/><ellipse cx="2.5" cy="1.5" rx="1.2" ry="0.8" fill="#ecdca8"/><rect x="1.7" y="3.3" width="1.6" height="4.3" fill="#8e969e"/><rect x="2.1" y="3.6" width="0.5" height="3.6" fill="#c8ced4"/></svg>
<div class="t" style="left:10.70px;top:532.62px;font-size:6.39px;line-height:7.67px;color:#4a5a78;transform:scaleX(0.9);transform-origin:0 50%;">... : Права [Только для чтен...</div>
<div style="left:0.00px;top:543.00px;width:1024.00px;height:10.00px;background:#f6f4e4;border-top:0.6px solid #e2dfcc;box-sizing:border-box"></div>
<div class="t" style="left:2.20px;top:544.59px;font-size:6.61px;line-height:7.93px;color:#333;transform:scaleX(0.9);transform-origin:0 50%;">Для получения подсказки нажмите F1</div>
<div style="left:969.70px;top:544.20px;width:18.80px;height:8.30px;border:0.6px solid #ebe7d4;box-sizing:border-box"></div>
<div class="t" style="left:973.00px;top:544.25px;font-size:6.50px;line-height:7.80px;color:#c8c0a0;transform:scaleX(0.9);transform-origin:0 50%;">CAP</div>
<div style="left:990.00px;top:544.20px;width:16.60px;height:8.30px;border:0.6px solid #ebe7d4;box-sizing:border-box"></div>
<div class="t" style="left:992.00px;top:544.25px;font-size:6.50px;line-height:7.80px;color:#555;transform:scaleX(0.9);transform-origin:0 50%;">NUM</div>
<div style="left:1009.50px;top:544.20px;width:14.50px;height:8.30px;border:0.6px solid #ebe7d4;box-sizing:border-box"></div>
<div class="t" style="left:1012.00px;top:544.25px;font-size:6.50px;line-height:7.80px;color:#555;transform:scaleX(0.9);transform-origin:0 50%;">ru ▾</div>
<div style="left:0.00px;top:553.00px;width:1024.00px;height:22.00px;background:#66c7e9;border-top:1.6px solid #7aa6b4;box-sizing:border-box"></div>
<div style="left:0.00px;top:573.70px;width:1024.00px;height:1.30px;background:#4a88a0"></div>
<div style="left:0.00px;top:554.00px;width:1.00px;height:20.00px;background:#2e6c88"></div>
<svg style="left:6.00px;top:557.50px;" width="15" height="14" viewBox="0 0 15 14"><path d="M0.3 2.2 L6.4 1.3 V6.6 H0.3 Z M7.3 1.15 L14.2 0.1 V6.6 H7.3 Z M0.3 7.4 H6.4 V12.4 L0.3 11.6 Z M7.3 7.4 H14.2 V13.4 L7.3 12.5 Z" fill="#f4fbff"/></svg>
<svg style="left:34.50px;top:556.50px;" width="18" height="16" viewBox="0 0 18 16"><rect x="0.4" y="0.3" width="7.6" height="2.6" fill="#1c7cc8"/><rect x="0.4" y="3.6" width="7.6" height="10" fill="#1c7cc8"/><rect x="3" y="8.4" width="14.5" height="7.3" rx="1" fill="#7c8e9c" stroke="#bfe6f6" stroke-width="0.6"/><rect x="8.2" y="7.2" width="4" height="1.6" fill="#7c8e9c"/><path d="M4.6 10.2 H16" stroke="#e8eef2" stroke-width="0.5"/></svg>
<svg style="left:68.50px;top:558.00px;" width="16" height="13" viewBox="0 0 16 13"><path d="M3.2 0.3 H15 Q15.8 0.3 15.6 1.2 L13.4 11.8 Q13.2 12.7 12.3 12.7 H1 Q0.2 12.7 0.4 11.8 L2.4 1.2 Q2.6 0.3 3.2 0.3 Z" fill="#2a78c0"/><path d="M3.2 0.3 H15 Q15.8 0.3 15.6 1.2 L14.8 5 H1.6 L2.4 1.2 Q2.6 0.3 3.2 0.3 Z" fill="#5aa0e0"/><path d="M4.8 3 L9.4 6.4 L4 9.8" fill="none" stroke="#e8f4ff" stroke-width="1.5"/></svg>
<svg style="left:101.00px;top:557.50px;" width="17" height="15" viewBox="0 0 17 15"><path d="M0.5 1.5 H5.5 L6.6 2.8 H16.2 V14.5 H0.5 Z" fill="#e8c868"/><rect x="1.2" y="3.2" width="14.2" height="3" fill="#fbf4d8"/><rect x="0.5" y="5" width="15.8" height="9.5" fill="#f6e08e"/><rect x="3.5" y="9" width="10" height="5" fill="#8ab8dc"/><rect x="5" y="10.5" width="7" height="1.4" fill="#f0e4a0"/></svg>
<svg style="left:134.30px;top:555.80px;" width="16" height="16" viewBox="0 0 16 16"><circle cx="8" cy="8" r="7.6" fill="#4aa850"/><path d="M8 8 L1.4 4.2 A7.6 7.6 0 0 1 14.6 4.2 Z" fill="#d84a38"/><path d="M8 8 L14.6 4.2 A7.6 7.6 0 0 1 8 15.6 Z" fill="#f4c832"/><circle cx="8" cy="8" r="3.4" fill="#fff"/><circle cx="8" cy="8" r="2.6" fill="#4a8ae0"/></svg>
<div style="left:159.40px;top:553.80px;width:32.20px;height:20.00px;background:#a0daf2;border:0.8px solid #2a6a86;box-sizing:border-box"></div>
<svg style="left:167.50px;top:556.20px;" width="16" height="16" viewBox="0 0 16 16"><defs><linearGradient id="g1c" x1="0" y1="0" x2="0" y2="1"><stop offset="0" stop-color="#fffbe8"/><stop offset="0.45" stop-color="#fbe48a"/><stop offset="1" stop-color="#f4a848"/></linearGradient></defs><circle cx="7.9" cy="7.8" r="7.5" fill="url(#g1c)" stroke="#d8b060" stroke-width="0.4"/><path d="M1.6 6.2 L4.4 4.6 V11.4 H2.9 V6.8 L1.6 7.4 Z" fill="#c8401c"/><path d="M12.2 7 Q11.6 4.9 9.2 4.9 Q6 4.9 6 8 Q6 11 9.2 11 H14.2 V9.6 H9.2 Q7.6 9.6 7.6 8 Q7.6 6.3 9.2 6.3 Q10.4 6.3 10.6 7.4 Z" fill="#c8401c"/></svg>
<svg style="left:911.50px;top:562.00px;" width="5" height="4" viewBox="0 0 5 4"><path d="M0.5 3 H4.5 L2.5 0.5 Z" fill="#1a2a3a"/></svg>
<svg style="left:921.00px;top:558.50px;" width="10" height="10" viewBox="0 0 10 10"><path d="M1.5 0.5 V9.5" stroke="#f0f0f0" stroke-width="0.9"/><path d="M2 1 H8.5 L7 3 L8.5 5 H2 Z" fill="#f4f4f4"/></svg>
<svg style="left:934.50px;top:558.00px;" width="10" height="11" viewBox="0 0 10 11"><rect x="0.5" y="1" width="4" height="5" fill="#c8d8e0" stroke="#8aa0b0" stroke-width="0.5"/><rect x="5" y="2" width="4" height="6" fill="#c8d8e0" stroke="#8aa0b0" stroke-width="0.5"/><path d="M3 6 V10 M7 8 V10" stroke="#666" stroke-width="0.6"/></svg>
<svg style="left:947.00px;top:558.50px;" width="11" height="10" viewBox="0 0 11 10"><path d="M0.5 3.5 H2.5 L5 1 V9 L2.5 6.5 H0.5 Z" fill="#e8e8e8"/><circle cx="7.5" cy="6.8" r="2.6" fill="#e04040"/><path d="M6.5 5.8 L8.5 7.8 M8.5 5.8 L6.5 7.8" stroke="#fff" stroke-width="0.6"/></svg>
<div class="t" style="left:964.00px;top:560.05px;font-size:6.67px;line-height:8.00px;color:#15304a;transform:scaleX(0.9);transform-origin:0 50%;-webkit-text-stroke:0.15px #15304a;">РУС</div>
<div class="t" style="left:987.50px;top:556.25px;font-size:6.67px;line-height:8.00px;color:#15304a;transform:scaleX(0.9);transform-origin:0 50%;-webkit-text-stroke:0.15px #15304a;width:26px;text-align:center">19:34</div>
<div class="t" style="left:986.00px;top:564.65px;font-size:6.67px;line-height:8.00px;color:#15304a;transform:scaleX(0.9);transform-origin:0 50%;-webkit-text-stroke:0.15px #15304a;">11.02.2018</div>
</div></body></html>
